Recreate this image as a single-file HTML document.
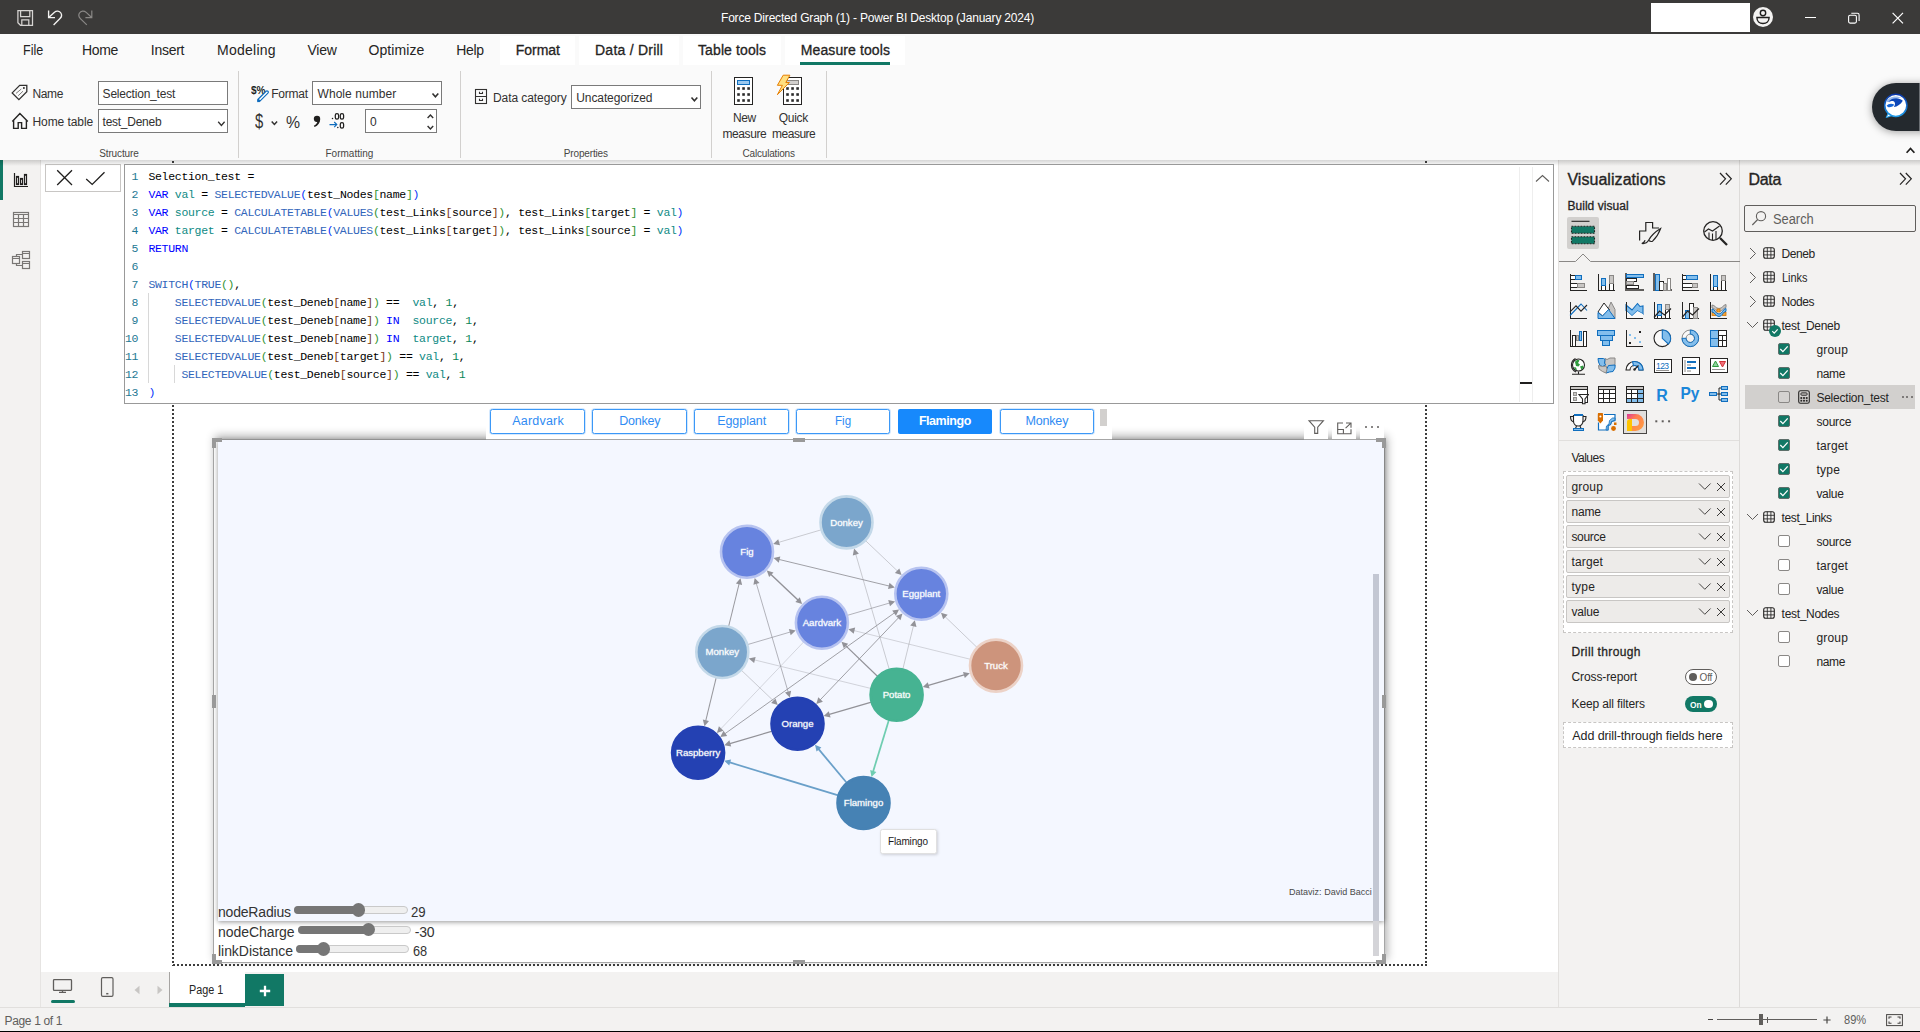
<!DOCTYPE html>
<html lang="en"><head><meta charset="utf-8"><title>Force Directed Graph (1) - Power BI Desktop</title>
<style>
html,body{margin:0;padding:0;}
body{width:1920px;height:1032px;overflow:hidden;background:#fff;font-family:"Liberation Sans",sans-serif;position:relative;}
#app{position:absolute;left:0;top:0;width:1920px;height:1032px;overflow:hidden;}
#app div,#app svg,#app span.t{position:absolute;box-sizing:border-box;}
span.t{white-space:pre;line-height:1;}

</style></head><body><div id="app">
<div style="left:40px;top:160px;width:1518px;height:812px;background:#ffffff;"></div>
<div style="left:0px;top:160px;width:40.5px;height:847px;background:#f3f2f1;border-right:1px solid #e6e4e2;"></div>
<div style="left:0px;top:160px;width:3px;height:40px;background:#117865;"></div>
<svg style="left:13px;top:172px;" width="16" height="16" viewBox="0 0 16 16"><g fill="none" stroke="#201f1e" stroke-width="1.200"><path d="M1.500 1v13.500H15"/><rect x="3.500" y="4.500" width="2" height="8"/><rect x="7.500" y="6.500" width="2" height="6"/><rect x="11.500" y="2.500" width="2" height="10"/></g></svg>
<svg style="left:12px;top:211px;" width="18" height="17" viewBox="0 0 18 17"><g fill="none" stroke="#797775" stroke-width="1.200"><rect x="1.500" y="1.500" width="15" height="14"/><path d="M1.500 3.500h15M1.500 7.500h15M1.500 11.500h15M6.500 3.500v12M11.500 3.500v12"/></g></svg>
<svg style="left:11px;top:250px;" width="20" height="20" viewBox="0 0 20 20"><g fill="none" stroke="#797775" stroke-width="1.200"><rect x="11.500" y="1.500" width="7" height="7"/><rect x="1.500" y="6.500" width="7" height="7"/><rect x="11.500" y="11.500" width="7" height="7"/><path d="M11.500 3.500h7M1.500 8.500h7M11.500 13.500h7M5.500 6.500v-2h6M5.500 13.500v2h6"/></g></svg>
<div style="left:45px;top:164px;width:76px;height:28px;background:#fff;border:1px solid #c8c6c4;"></div>
<svg style="left:56px;top:169.4px;" width="17" height="17" viewBox="0 0 17 17"><path d="M1.200 1.200l14.800 14.800M16 1.200L1.200 16" fill="none" stroke="#201f1e" stroke-width="1.300"/></svg>
<svg style="left:84.6px;top:171px;" width="21" height="15" viewBox="0 0 21 15"><path d="M1.200 8l6 5.400L19.500 1.200" fill="none" stroke="#201f1e" stroke-width="1.300"/></svg>
<div style="left:124px;top:164px;width:1430px;height:240px;background:#fff;border:1px solid #999999;z-index:60;"></div>
<div style="left:1518.5px;top:167px;width:1px;height:235px;background:#eeeeee;z-index:61;"></div>
<div style="left:1532px;top:167px;width:1px;height:235px;background:#eeeeee;z-index:61;"></div>
<div style="left:1519.5px;top:382px;width:12.5px;height:2px;background:#201f1e;z-index:61;"></div>
<svg style="left:1534.5px;top:174px;z-index:61;" width="15" height="9" viewBox="0 0 15 9"><path d="M1 7.500l6.500-6 6.500 6" fill="none" stroke="#605e5c" stroke-width="1.100"/></svg>
<div style="left:148px;top:293px;width:1px;height:90px;background:#d8d8d8;z-index:61;"></div>
<div style="left:174px;top:365px;width:1px;height:18px;background:#d8d8d8;z-index:61;"></div>
<div style='left:125px;top:167.6px;width:13px;text-align:right;color:#237893;font-family:"Liberation Mono",monospace;font-size:11.5px;letter-spacing:-0.3px;line-height:18px;white-space:pre;z-index:62;'>1</div>
<div style='left:148.400px;top:167.6px;font-family:"Liberation Mono",monospace;font-size:11.5px;letter-spacing:-0.3px;line-height:18px;white-space:pre;z-index:62;'><span style="color:#000000">Selection_test =</span></div>
<div style='left:125px;top:185.6px;width:13px;text-align:right;color:#237893;font-family:"Liberation Mono",monospace;font-size:11.5px;letter-spacing:-0.3px;line-height:18px;white-space:pre;z-index:62;'>2</div>
<div style='left:148.400px;top:185.6px;font-family:"Liberation Mono",monospace;font-size:11.5px;letter-spacing:-0.3px;line-height:18px;white-space:pre;z-index:62;'><span style="color:#0000ff">VAR</span> <span style="color:#0e8a84">val</span><span style="color:#000000"> = </span><span style="color:#3165bb">SELECTEDVALUE</span><span style="color:#0431fa">(</span><span style="color:#000000">test_Nodes</span><span style="color:#319331">[</span><span style="color:#000000">name</span><span style="color:#319331">]</span><span style="color:#0431fa">)</span></div>
<div style='left:125px;top:203.6px;width:13px;text-align:right;color:#237893;font-family:"Liberation Mono",monospace;font-size:11.5px;letter-spacing:-0.3px;line-height:18px;white-space:pre;z-index:62;'>3</div>
<div style='left:148.400px;top:203.6px;font-family:"Liberation Mono",monospace;font-size:11.5px;letter-spacing:-0.3px;line-height:18px;white-space:pre;z-index:62;'><span style="color:#0000ff">VAR</span> <span style="color:#0e8a84">source</span><span style="color:#000000"> = </span><span style="color:#3165bb">CALCULATETABLE</span><span style="color:#0431fa">(</span><span style="color:#3165bb">VALUES</span><span style="color:#319331">(</span><span style="color:#000000">test_Links</span><span style="color:#7b3814">[</span><span style="color:#000000">source</span><span style="color:#7b3814">]</span><span style="color:#319331">)</span><span style="color:#000000">, test_Links</span><span style="color:#319331">[</span><span style="color:#000000">target</span><span style="color:#319331">]</span><span style="color:#000000"> = </span><span style="color:#0e8a84">val</span><span style="color:#0431fa">)</span></div>
<div style='left:125px;top:221.6px;width:13px;text-align:right;color:#237893;font-family:"Liberation Mono",monospace;font-size:11.5px;letter-spacing:-0.3px;line-height:18px;white-space:pre;z-index:62;'>4</div>
<div style='left:148.400px;top:221.6px;font-family:"Liberation Mono",monospace;font-size:11.5px;letter-spacing:-0.3px;line-height:18px;white-space:pre;z-index:62;'><span style="color:#0000ff">VAR</span> <span style="color:#0e8a84">target</span><span style="color:#000000"> = </span><span style="color:#3165bb">CALCULATETABLE</span><span style="color:#0431fa">(</span><span style="color:#3165bb">VALUES</span><span style="color:#319331">(</span><span style="color:#000000">test_Links</span><span style="color:#7b3814">[</span><span style="color:#000000">target</span><span style="color:#7b3814">]</span><span style="color:#319331">)</span><span style="color:#000000">, test_Links</span><span style="color:#319331">[</span><span style="color:#000000">source</span><span style="color:#319331">]</span><span style="color:#000000"> = </span><span style="color:#0e8a84">val</span><span style="color:#0431fa">)</span></div>
<div style='left:125px;top:239.6px;width:13px;text-align:right;color:#237893;font-family:"Liberation Mono",monospace;font-size:11.5px;letter-spacing:-0.3px;line-height:18px;white-space:pre;z-index:62;'>5</div>
<div style='left:148.400px;top:239.6px;font-family:"Liberation Mono",monospace;font-size:11.5px;letter-spacing:-0.3px;line-height:18px;white-space:pre;z-index:62;'><span style="color:#0000ff">RETURN</span></div>
<div style='left:125px;top:257.6px;width:13px;text-align:right;color:#237893;font-family:"Liberation Mono",monospace;font-size:11.5px;letter-spacing:-0.3px;line-height:18px;white-space:pre;z-index:62;'>6</div>
<div style='left:125px;top:275.6px;width:13px;text-align:right;color:#237893;font-family:"Liberation Mono",monospace;font-size:11.5px;letter-spacing:-0.3px;line-height:18px;white-space:pre;z-index:62;'>7</div>
<div style='left:148.400px;top:275.6px;font-family:"Liberation Mono",monospace;font-size:11.5px;letter-spacing:-0.3px;line-height:18px;white-space:pre;z-index:62;'><span style="color:#3165bb">SWITCH</span><span style="color:#0431fa">(</span><span style="color:#3165bb">TRUE</span><span style="color:#319331">()</span><span style="color:#000000">,</span></div>
<div style='left:125px;top:293.6px;width:13px;text-align:right;color:#237893;font-family:"Liberation Mono",monospace;font-size:11.5px;letter-spacing:-0.3px;line-height:18px;white-space:pre;z-index:62;'>8</div>
<div style='left:148.400px;top:293.6px;font-family:"Liberation Mono",monospace;font-size:11.5px;letter-spacing:-0.3px;line-height:18px;white-space:pre;z-index:62;'>    <span style="color:#3165bb">SELECTEDVALUE</span><span style="color:#319331">(</span><span style="color:#000000">test_Deneb</span><span style="color:#7b3814">[</span><span style="color:#000000">name</span><span style="color:#7b3814">]</span><span style="color:#319331">)</span> <span style="color:#000000">==</span>  <span style="color:#0e8a84">val</span><span style="color:#000000">, </span><span style="color:#098658">1</span><span style="color:#000000">,</span></div>
<div style='left:125px;top:311.6px;width:13px;text-align:right;color:#237893;font-family:"Liberation Mono",monospace;font-size:11.5px;letter-spacing:-0.3px;line-height:18px;white-space:pre;z-index:62;'>9</div>
<div style='left:148.400px;top:311.6px;font-family:"Liberation Mono",monospace;font-size:11.5px;letter-spacing:-0.3px;line-height:18px;white-space:pre;z-index:62;'>    <span style="color:#3165bb">SELECTEDVALUE</span><span style="color:#319331">(</span><span style="color:#000000">test_Deneb</span><span style="color:#7b3814">[</span><span style="color:#000000">name</span><span style="color:#7b3814">]</span><span style="color:#319331">)</span> <span style="color:#0000ff">IN</span>  <span style="color:#0e8a84">source</span><span style="color:#000000">, </span><span style="color:#098658">1</span><span style="color:#000000">,</span></div>
<div style='left:125px;top:329.6px;width:13px;text-align:right;color:#237893;font-family:"Liberation Mono",monospace;font-size:11.5px;letter-spacing:-0.3px;line-height:18px;white-space:pre;z-index:62;'>10</div>
<div style='left:148.400px;top:329.6px;font-family:"Liberation Mono",monospace;font-size:11.5px;letter-spacing:-0.3px;line-height:18px;white-space:pre;z-index:62;'>    <span style="color:#3165bb">SELECTEDVALUE</span><span style="color:#319331">(</span><span style="color:#000000">test_Deneb</span><span style="color:#7b3814">[</span><span style="color:#000000">name</span><span style="color:#7b3814">]</span><span style="color:#319331">)</span> <span style="color:#0000ff">IN</span>  <span style="color:#0e8a84">target</span><span style="color:#000000">, </span><span style="color:#098658">1</span><span style="color:#000000">,</span></div>
<div style='left:125px;top:347.6px;width:13px;text-align:right;color:#237893;font-family:"Liberation Mono",monospace;font-size:11.5px;letter-spacing:-0.3px;line-height:18px;white-space:pre;z-index:62;'>11</div>
<div style='left:148.400px;top:347.6px;font-family:"Liberation Mono",monospace;font-size:11.5px;letter-spacing:-0.3px;line-height:18px;white-space:pre;z-index:62;'>    <span style="color:#3165bb">SELECTEDVALUE</span><span style="color:#319331">(</span><span style="color:#000000">test_Deneb</span><span style="color:#7b3814">[</span><span style="color:#000000">target</span><span style="color:#7b3814">]</span><span style="color:#319331">)</span> <span style="color:#000000">==</span> <span style="color:#0e8a84">val</span><span style="color:#000000">, </span><span style="color:#098658">1</span><span style="color:#000000">,</span></div>
<div style='left:125px;top:365.6px;width:13px;text-align:right;color:#237893;font-family:"Liberation Mono",monospace;font-size:11.5px;letter-spacing:-0.3px;line-height:18px;white-space:pre;z-index:62;'>12</div>
<div style='left:148.400px;top:365.6px;font-family:"Liberation Mono",monospace;font-size:11.5px;letter-spacing:-0.3px;line-height:18px;white-space:pre;z-index:62;'>     <span style="color:#3165bb">SELECTEDVALUE</span><span style="color:#319331">(</span><span style="color:#000000">test_Deneb</span><span style="color:#7b3814">[</span><span style="color:#000000">source</span><span style="color:#7b3814">]</span><span style="color:#319331">)</span> <span style="color:#000000">==</span> <span style="color:#0e8a84">val</span><span style="color:#000000">, </span><span style="color:#098658">1</span><span style="color:#000000"></span></div>
<div style='left:125px;top:383.6px;width:13px;text-align:right;color:#237893;font-family:"Liberation Mono",monospace;font-size:11.5px;letter-spacing:-0.3px;line-height:18px;white-space:pre;z-index:62;'>13</div>
<div style='left:148.400px;top:383.6px;font-family:"Liberation Mono",monospace;font-size:11.5px;letter-spacing:-0.3px;line-height:18px;white-space:pre;z-index:62;'><span style="color:#0431fa">)</span></div>
<div style="left:172px;top:161px;width:2px;height:805px;background:repeating-linear-gradient(to bottom,#3d3d3d 0,#3d3d3d 2px,transparent 2px,transparent 4px);"></div>
<div style="left:1425px;top:161px;width:2px;height:805px;background:repeating-linear-gradient(to bottom,#3d3d3d 0,#3d3d3d 2px,transparent 2px,transparent 4px);"></div>
<div style="left:173px;top:964px;width:1254px;height:2px;background:repeating-linear-gradient(to right,#3d3d3d 0,#3d3d3d 2px,transparent 2px,transparent 4px);"></div>
<div style="left:213px;top:439px;width:1172px;height:524px;background:#fff;border:1px solid #a6a6a6;box-shadow:2px -3px 9px rgba(0,0,0,.32);"></div>
<div style="left:217.5px;top:440px;width:1166.5px;height:481px;background:#f4f7ff;box-shadow:0 1px 5px rgba(0,0,0,.42);"></div>
<div style="left:1373px;top:574px;width:5.6px;height:347px;background:#c3c7d3;"></div>
<div style="left:1373px;top:921px;width:5.6px;height:35px;background:#d4d4d8;"></div>
<div style="left:486px;top:404px;width:626px;height:35px;background:#fff;"></div>
<div style="left:486px;top:439px;width:626px;height:1px;background:#a6a6a6;"></div>
<div style="left:1304px;top:415px;width:24px;height:24px;background:#fff;"></div>
<div style="left:1332px;top:415px;width:24px;height:24px;background:#fff;"></div>
<div style="left:1360px;top:415px;width:24px;height:24px;background:#fff;"></div>
<div style="left:1304px;top:439px;width:81px;height:1px;background:#a6a6a6;"></div>
<svg style="left:1307px;top:419px;" width="18" height="16" viewBox="0 0 18 16"><path d="M2 1.700h14.400l-5.700 6.500v6.200H7.700V8.200z" fill="none" stroke="#605e5c" stroke-width="1.100"/></svg>
<svg style="left:1336px;top:420.5px;" width="17" height="15" viewBox="0 0 17 15"><g fill="none" stroke="#605e5c" stroke-width="1.100"><path d="M7 2H1.700v10.700h13.300V8.300"/><path d="M1.700 8.500h5.700v4.200"/><path d="M10 2h5v4.800M14.800 2.200l-5.200 5"/></g></svg>
<div style="left:1365px;top:425.7px;width:2.2px;height:2.2px;background:#605e5c;border-radius:50%;"></div>
<div style="left:1371px;top:425.7px;width:2.2px;height:2.2px;background:#605e5c;border-radius:50%;"></div>
<div style="left:1377px;top:425.7px;width:2.2px;height:2.2px;background:#605e5c;border-radius:50%;"></div>
<div style="left:490.3px;top:408.6px;width:94.6px;height:25.3px;background:#fff;border:1px solid #3b98f7;border-radius:2.5px;box-shadow:0 0 0 0.8px rgba(59,152,247,.28);"></div>
<span class="t" style='left:512.20px;top:415.00px;font-size:12.5px;color:#2f8bf3;letter-spacing:0.210px;'>Aardvark</span>
<div style="left:592.16px;top:408.6px;width:94.6px;height:25.3px;background:#fff;border:1px solid #3b98f7;border-radius:2.5px;box-shadow:0 0 0 0.8px rgba(59,152,247,.28);"></div>
<span class="t" style='left:619.20px;top:415.00px;font-size:12.5px;color:#2f8bf3;letter-spacing:-0.218px;'>Donkey</span>
<div style="left:694.02px;top:408.6px;width:94.6px;height:25.3px;background:#fff;border:1px solid #3b98f7;border-radius:2.5px;box-shadow:0 0 0 0.8px rgba(59,152,247,.28);"></div>
<span class="t" style='left:717.20px;top:415.00px;font-size:12.5px;color:#2f8bf3;letter-spacing:-0.051px;'>Eggplant</span>
<div style="left:795.88px;top:408.6px;width:94.6px;height:25.3px;background:#fff;border:1px solid #3b98f7;border-radius:2.5px;box-shadow:0 0 0 0.8px rgba(59,152,247,.28);"></div>
<span class="t" style='left:835.20px;top:415.00px;font-size:12.5px;color:#2f8bf3;transform-origin:0 50%;transform:scaleX(0.9266);'>Fig</span>
<div style="left:897.74px;top:408.6px;width:94.6px;height:25.3px;background:#1789fc;border-radius:2px;"></div>
<span class="t" style='left:918.90px;top:415.00px;font-size:12.5px;color:#ffffff;font-weight:700;letter-spacing:-0.452px;'>Flamingo</span>
<div style="left:999.6px;top:408.6px;width:94.6px;height:25.3px;background:#fff;border:1px solid #3b98f7;border-radius:2.5px;box-shadow:0 0 0 0.8px rgba(59,152,247,.28);"></div>
<span class="t" style='left:1025.40px;top:415.00px;font-size:12.5px;color:#2f8bf3;letter-spacing:-0.156px;'>Monkey</span>
<div style="left:1099.8px;top:408.6px;width:7px;height:17.5px;background:#d2d0ce;"></div>
<div style="left:212px;top:438px;width:10px;height:4px;background:#999999;"></div>
<div style="left:212px;top:438px;width:4px;height:10px;background:#999999;"></div>
<div style="left:1376px;top:438px;width:10px;height:4px;background:#999999;"></div>
<div style="left:1382px;top:438px;width:4px;height:10px;background:#999999;"></div>
<div style="left:212px;top:960px;width:10px;height:4px;background:#999999;"></div>
<div style="left:212px;top:954px;width:4px;height:10px;background:#999999;"></div>
<div style="left:1376px;top:960px;width:10px;height:4px;background:#999999;"></div>
<div style="left:1382px;top:954px;width:4px;height:10px;background:#999999;"></div>
<div style="left:793px;top:438px;width:12px;height:4px;background:#999999;"></div>
<div style="left:793px;top:960px;width:12px;height:4px;background:#999999;"></div>
<div style="left:212px;top:695px;width:4px;height:13px;background:#999999;"></div>
<div style="left:1382px;top:695px;width:4px;height:13px;background:#999999;"></div>
<svg style="left:217px;top:440px;font-family:'Liberation Sans',sans-serif;" width="1167" height="481" viewBox="0 0 1167 481"><line x1="604.3" y1="89.8" x2="560.9" y2="102.6" stroke="#929298" stroke-width="0.64" stroke-opacity="0.7"/><path d="M556.2 104.0L561.2 99.2L563.0 105.3z" fill="#929298"/><line x1="648.5" y1="100.6" x2="681.0" y2="131.5" stroke="#929298" stroke-width="0.64" stroke-opacity="0.7"/><path d="M684.6 135.0L677.9 133.0L682.3 128.4z" fill="#929298"/><line x1="561.4" y1="119.3" x2="672.9" y2="146.2" stroke="#929298" stroke-width="0.96" stroke-opacity="0.9"/><path d="M677.8 147.4L671.0 149.0L672.5 142.8z" fill="#929298"/><path d="M556.5 118.1L563.3 116.5L561.8 122.7z" fill="#929298"/><line x1="553.4" y1="133.9" x2="581.5" y2="160.5" stroke="#929298" stroke-width="1.44" stroke-opacity="1"/><path d="M585.1 163.9L578.4 162.0L582.8 157.3z" fill="#929298"/><path d="M549.8 130.5L556.5 132.4L552.1 137.1z" fill="#929298"/><line x1="511.6" y1="186.5" x2="522.3" y2="143.0" stroke="#929298" stroke-width="1.04" stroke-opacity="0.95"/><path d="M523.5 138.2L525.1 145.0L518.9 143.5z" fill="#929298"/><line x1="539.1" y1="142.7" x2="571.4" y2="252.8" stroke="#929298" stroke-width="0.80" stroke-opacity="0.85"/><path d="M572.8 257.6L568.0 252.6L574.1 250.8z" fill="#929298"/><path d="M537.7 137.9L542.5 142.9L536.4 144.7z" fill="#929298"/><line x1="630.2" y1="175.4" x2="673.3" y2="162.8" stroke="#929298" stroke-width="0.80" stroke-opacity="0.85"/><path d="M678.1 161.4L673.0 166.2L671.2 160.1z" fill="#929298"/><line x1="530.5" y1="204.6" x2="574.0" y2="191.8" stroke="#929298" stroke-width="0.80" stroke-opacity="0.85"/><path d="M578.7 190.4L573.7 195.2L571.9 189.1z" fill="#929298"/><line x1="753.5" y1="219.3" x2="636.2" y2="190.4" stroke="#929298" stroke-width="0.56" stroke-opacity="0.65"/><path d="M631.4 189.2L638.2 187.6L636.7 193.8z" fill="#929298"/><line x1="660.7" y1="236.5" x2="628.1" y2="205.1" stroke="#929298" stroke-width="1.20" stroke-opacity="1"/><path d="M624.5 201.7L631.2 203.7L626.8 208.3z" fill="#929298"/><line x1="672.3" y1="229.5" x2="638.5" y2="113.4" stroke="#929298" stroke-width="0.64" stroke-opacity="0.7"/><path d="M637.1 108.6L641.9 113.7L635.8 115.5z" fill="#929298"/><line x1="685.8" y1="229.3" x2="696.6" y2="185.1" stroke="#929298" stroke-width="0.64" stroke-opacity="0.7"/><path d="M697.8 180.3L699.5 187.1L693.2 185.6z" fill="#929298"/><line x1="760.0" y1="207.4" x2="727.6" y2="176.2" stroke="#929298" stroke-width="0.64" stroke-opacity="0.7"/><path d="M724.0 172.7L730.7 174.7L726.2 179.3z" fill="#929298"/><line x1="710.6" y1="245.7" x2="748.0" y2="234.7" stroke="#929298" stroke-width="1.20" stroke-opacity="1"/><path d="M752.8 233.3L747.8 238.1L746.0 232.0z" fill="#929298"/><path d="M705.8 247.1L710.8 242.3L712.6 248.4z" fill="#929298"/><line x1="654.1" y1="248.5" x2="536.6" y2="219.7" stroke="#929298" stroke-width="0.56" stroke-opacity="0.65"/><path d="M531.8 218.5L538.6 216.9L537.1 223.1z" fill="#929298"/><line x1="654.4" y1="262.2" x2="611.5" y2="274.7" stroke="#929298" stroke-width="1.20" stroke-opacity="1"/><path d="M606.7 276.1L611.8 271.3L613.6 277.5z" fill="#929298"/><line x1="524.3" y1="230.2" x2="557.2" y2="261.5" stroke="#929298" stroke-width="0.64" stroke-opacity="0.7"/><path d="M560.8 264.9L554.1 263.0L558.5 258.4z" fill="#929298"/><line x1="499.2" y1="237.6" x2="488.6" y2="281.4" stroke="#929298" stroke-width="1.04" stroke-opacity="0.95"/><path d="M487.5 286.3L485.8 279.5L492.0 281.0z" fill="#929298"/><line x1="682.1" y1="177.2" x2="602.7" y2="260.4" stroke="#929298" stroke-width="0.96" stroke-opacity="0.9"/><path d="M599.3 264.0L601.3 257.3L605.9 261.7z" fill="#929298"/><path d="M685.5 173.6L683.5 180.3L678.9 175.9z" fill="#929298"/><line x1="678.0" y1="172.5" x2="507.4" y2="294.1" stroke="#929298" stroke-width="0.96" stroke-opacity="0.9"/><path d="M503.3 297.0L506.5 290.8L510.2 296.0z" fill="#929298"/><path d="M682.1 169.6L678.9 175.8L675.2 170.6z" fill="#929298"/><line x1="586.8" y1="201.8" x2="503.3" y2="289.4" stroke="#929298" stroke-width="0.56" stroke-opacity="0.6"/><path d="M499.9 293.0L501.9 286.3L506.5 290.7z" fill="#929298"/><line x1="555.3" y1="291.2" x2="512.1" y2="303.8" stroke="#929298" stroke-width="1.20" stroke-opacity="1"/><path d="M507.3 305.2L512.4 300.3L514.2 306.5z" fill="#929298"/><line x1="671.9" y1="279.9" x2="655.9" y2="332.2" stroke="#6fcdb1" stroke-width="1.76" stroke-opacity="1"/><path d="M654.5 336.9L653.2 330.0L659.4 331.9z" fill="#6fcdb1"/><line x1="629.7" y1="342.8" x2="601.2" y2="308.6" stroke="#6aa0c9" stroke-width="1.76" stroke-opacity="1"/><path d="M598.0 304.8L604.4 307.5L599.5 311.6z" fill="#6aa0c9"/><line x1="621.3" y1="355.4" x2="512.0" y2="322.2" stroke="#6aa0c9" stroke-width="1.76" stroke-opacity="1"/><path d="M507.2 320.7L514.1 319.5L512.2 325.6z" fill="#6aa0c9"/><circle cx="629.5" cy="82.4" r="26" fill="#7ba6cc" stroke="#c4d9e9" stroke-width="2.600"/><circle cx="530.0" cy="111.7" r="26" fill="#6783df" stroke="#b7c3f0" stroke-width="2.600"/><circle cx="704.3" cy="153.8" r="26" fill="#6783df" stroke="#b7c3f0" stroke-width="2.600"/><circle cx="604.9" cy="182.7" r="26" fill="#6783df" stroke="#b7c3f0" stroke-width="2.600"/><circle cx="505.3" cy="212.0" r="26" fill="#7ba6cc" stroke="#c4d9e9" stroke-width="2.600"/><circle cx="779.0" cy="225.6" r="26" fill="#cd947c" stroke="#ecd2c7" stroke-width="2.600"/><circle cx="679.6" cy="254.8" r="26" fill="#46b392" stroke="#46b392" stroke-width="2.600"/><circle cx="580.5" cy="283.8" r="26" fill="#2441b3" stroke="#2441b3" stroke-width="2.600"/><circle cx="481.1" cy="312.8" r="26" fill="#2441b3" stroke="#2441b3" stroke-width="2.600"/><circle cx="646.5" cy="363.0" r="26" fill="#4682b4" stroke="#4682b4" stroke-width="2.600"/><text x="629.5" y="85.7" text-anchor="middle" font-size="9.600" fill="#fff" stroke="#fff" stroke-width="0.900" stroke-opacity=".38">Donkey</text><text x="530.0" y="115.0" text-anchor="middle" font-size="9.600" fill="#fff" stroke="#fff" stroke-width="0.900" stroke-opacity=".38">Fig</text><text x="704.3" y="157.1" text-anchor="middle" font-size="9.600" fill="#fff" stroke="#fff" stroke-width="0.900" stroke-opacity=".38">Eggplant</text><text x="604.9" y="186.0" text-anchor="middle" font-size="9.600" fill="#fff" stroke="#fff" stroke-width="0.900" stroke-opacity=".38">Aardvark</text><text x="505.3" y="215.3" text-anchor="middle" font-size="9.600" fill="#fff" stroke="#fff" stroke-width="0.900" stroke-opacity=".38">Monkey</text><text x="779.0" y="228.9" text-anchor="middle" font-size="9.600" fill="#fff" stroke="#fff" stroke-width="0.900" stroke-opacity=".38">Truck</text><text x="679.6" y="258.1" text-anchor="middle" font-size="9.600" fill="#fff" stroke="#fff" stroke-width="0.900" stroke-opacity=".38">Potato</text><text x="580.5" y="287.1" text-anchor="middle" font-size="9.600" fill="#fff" stroke="#fff" stroke-width="0.900" stroke-opacity=".38">Orange</text><text x="481.1" y="316.1" text-anchor="middle" font-size="9.600" fill="#fff" stroke="#fff" stroke-width="0.900" stroke-opacity=".38">Raspberry</text><text x="646.5" y="366.3" text-anchor="middle" font-size="9.600" fill="#fff" stroke="#fff" stroke-width="0.900" stroke-opacity=".38">Flamingo</text></svg>
<div style="left:879.5px;top:828.5px;width:57px;height:25.5px;background:#fff;border:1px solid #e0e0e0;border-radius:2.5px;box-shadow:1px 1px 3px rgba(0,0,0,.16);"></div>
<span class="t" style='left:888.00px;top:837.00px;font-size:10px;color:#1b1b1b;letter-spacing:-0.163px;'>Flamingo</span>
<span class="t" style='left:1289.00px;top:888.00px;font-size:9px;color:#4a4a4a;letter-spacing:0.014px;'>Dataviz: David Bacci</span>
<div style="left:294px;top:906px;width:113.5px;height:8px;background:#efefef;border:1px solid #c9c9c9;border-radius:4px;"></div>
<div style="left:294px;top:906px;width:64.30000000000001px;height:8px;background:#767676;border-radius:4px 0 0 4px;"></div>
<div style="left:351.6px;top:903.3px;width:13.4px;height:13.4px;background:#767676;border-radius:50%;"></div>
<div style="left:298px;top:925.7px;width:112.80000000000001px;height:8px;background:#efefef;border:1px solid #c9c9c9;border-radius:4px;"></div>
<div style="left:298px;top:925.7px;width:70.30000000000001px;height:8px;background:#767676;border-radius:4px 0 0 4px;"></div>
<div style="left:361.6px;top:923.0px;width:13.4px;height:13.4px;background:#767676;border-radius:50%;"></div>
<div style="left:295.8px;top:945px;width:113.19999999999999px;height:8px;background:#efefef;border:1px solid #c9c9c9;border-radius:4px;"></div>
<div style="left:295.8px;top:945px;width:28.0px;height:8px;background:#767676;border-radius:4px 0 0 4px;"></div>
<div style="left:317.1px;top:942.3px;width:13.4px;height:13.4px;background:#767676;border-radius:50%;"></div>
<span class="t" style='left:218.00px;top:905.00px;font-size:14px;color:#333;letter-spacing:-0.193px;'>nodeRadius</span>
<span class="t" style='left:218.00px;top:925.00px;font-size:14px;color:#333;letter-spacing:-0.062px;'>nodeCharge</span>
<span class="t" style='left:218.00px;top:944.00px;font-size:14px;color:#333;letter-spacing:-0.044px;'>linkDistance</span>
<span class="t" style='left:410.80px;top:905.00px;font-size:14px;color:#333;transform-origin:0 50%;transform:scaleX(0.9436);'>29</span>
<span class="t" style='left:414.70px;top:925.00px;font-size:14px;color:#333;letter-spacing:-0.217px;'>-30</span>
<span class="t" style='left:412.80px;top:944.00px;font-size:14px;color:#333;transform-origin:0 50%;transform:scaleX(0.9115);'>68</span>
<div style="left:1558px;top:160px;width:362px;height:847px;background:#f3f2f1;"></div>
<div style="left:1558px;top:160px;width:1px;height:847px;background:#e3e1df;"></div>
<div style="left:1739px;top:160px;width:1px;height:847px;background:#dddbd9;"></div>
<span class="t" style='left:1567.40px;top:172.00px;font-size:16px;color:#252423;letter-spacing:0.050px;-webkit-text-stroke:0.35px #252423;'>Visualizations</span>
<svg style="left:1718.5px;top:172px;" width="14" height="14" viewBox="0 0 14 14"><path d="M1 1l5.500 5.800L1 12.600M6.800 1l5.500 5.800-5.500 5.800" fill="none" stroke="#252423" stroke-width="1.200"/></svg>
<span class="t" style='left:1567.40px;top:200.00px;font-size:12px;color:#252423;letter-spacing:0.054px;-webkit-text-stroke:0.3px #252423;'>Build visual</span>
<div style="left:1567px;top:217px;width:32px;height:32px;background:#d2d0ce;border-radius:2px;"></div>
<svg style="left:1570px;top:220px;" width="26" height="26" viewBox="0 0 26 26"><path d="M1.500 1.300h18" stroke="#252423" stroke-width="1.100"/><rect x="1.500" y="6.300" width="23" height="7" fill="#117865" stroke="#252423" stroke-width="1.100" stroke-dasharray="1.800 1.200"/><rect x="1.500" y="16.800" width="23" height="7" fill="#117865" stroke="#252423" stroke-width="1.100" stroke-dasharray="1.800 1.200"/></svg>
<svg style="left:1638px;top:221px;" width="24" height="24" viewBox="0 0 24 24"><g fill="none" stroke="#252423" stroke-width="1.200"><path d="M1.600 19.500V10h6.200V1.500h6.800V7h6.400"/><path d="M22.600 7.600C17 11 13 15 10.600 19.300c1.300 1.200 2.600 1.500 4 .9 3.600-3.600 6.300-7.800 8-12.600z"/><path d="M10.600 19.300c-1.400 2.500-3.800 3.600-6.800 3.200 1.700-.6 2.800-1.700 3.300-3.300"/></g></svg>
<svg style="left:1702px;top:220px;" width="26" height="26" viewBox="0 0 26 26"><g fill="none" stroke="#252423"><circle cx="11" cy="11" r="9.300" stroke-width="1.300"/><path d="M2.500 12l4-3 4 2 7-5" stroke-width="1.100"/><path d="M7 12.500v6.500M10.500 13.500v6.500M14 11v8.500" stroke-width="1.100"/><path d="M18 18l7 7" stroke-width="2.300"/></g></svg>
<svg style="left:1559px;top:252px;" width="181" height="11" viewBox="0 0 181 11"><path d="M0 9.500h16.500l7.500-7.500 7.500 7.500H181" fill="none" stroke="#8a8886" stroke-width="1"/></svg>
<svg style="left:1569px;top:273px;" width="20" height="20" viewBox="0 0 20 20"><path d="M1 0.500V17h17" fill="none" stroke="#252423" stroke-width="1" shape-rendering="crispEdges"/><rect x="1" y="2.5" width="5" height="4" fill="#ffffff" stroke="#252423" stroke-width="1" shape-rendering="crispEdges"/><rect x="6" y="2.5" width="6" height="4" fill="#83beec" stroke="#106ebe" stroke-width="1" shape-rendering="crispEdges"/><rect x="1" y="10.5" width="7" height="4" fill="#ffffff" stroke="#252423" stroke-width="1" shape-rendering="crispEdges"/><rect x="8" y="10.5" width="7.5" height="4" fill="#c8c6c4" stroke="#8a8886" stroke-width="1" shape-rendering="crispEdges"/></svg>
<svg style="left:1597px;top:273px;" width="20" height="20" viewBox="0 0 20 20"><path d="M1 0.500V17h17" fill="none" stroke="#252423" stroke-width="1" shape-rendering="crispEdges"/><rect x="4" y="12" width="4" height="5" fill="#ffffff" stroke="#252423" stroke-width="1" shape-rendering="crispEdges"/><rect x="4" y="5.5" width="4" height="6.5" fill="#83beec" stroke="#106ebe" stroke-width="1" shape-rendering="crispEdges"/><rect x="12" y="10" width="4" height="7" fill="#ffffff" stroke="#252423" stroke-width="1" shape-rendering="crispEdges"/><rect x="12" y="2.5" width="4" height="7.5" fill="#c8c6c4" stroke="#8a8886" stroke-width="1" shape-rendering="crispEdges"/></svg>
<svg style="left:1625px;top:273px;" width="20" height="20" viewBox="0 0 20 20"><path d="M1 0v17.300h18" fill="none" stroke="#605e5c" stroke-width="2" shape-rendering="crispEdges"/><rect x="1.5" y="1" width="16.5" height="3.4" fill="#83beec" stroke="#106ebe" stroke-width="1" shape-rendering="crispEdges"/><rect x="1.5" y="5" width="9.5" height="3" fill="#ffffff" stroke="#252423" stroke-width="1" shape-rendering="crispEdges"/><rect x="1.5" y="8.6" width="6.5" height="3" fill="#c8c6c4" stroke="#8a8886" stroke-width="1" shape-rendering="crispEdges"/><rect x="1.5" y="12.2" width="12" height="3.3" fill="#ffffff" stroke="#252423" stroke-width="1" shape-rendering="crispEdges"/></svg>
<svg style="left:1653px;top:273px;" width="20" height="20" viewBox="0 0 20 20"><path d="M1 0v17.300h18" fill="none" stroke="#605e5c" stroke-width="2" shape-rendering="crispEdges"/><rect x="2" y="1" width="4" height="16" fill="#83beec" stroke="#106ebe" stroke-width="1" shape-rendering="crispEdges"/><rect x="6.5" y="8" width="3.5" height="9" fill="#ffffff" stroke="#252423" stroke-width="1" shape-rendering="crispEdges"/><rect x="10.5" y="10.5" width="3" height="6.5" fill="#c8c6c4" stroke="#8a8886" stroke-width="1" shape-rendering="crispEdges"/><rect x="14" y="5.5" width="3.5" height="11.5" fill="#ffffff" stroke="#8a8886" stroke-width="1" shape-rendering="crispEdges"/></svg>
<svg style="left:1681px;top:273px;" width="20" height="20" viewBox="0 0 20 20"><path d="M1 0.500V17h17" fill="none" stroke="#252423" stroke-width="1" shape-rendering="crispEdges"/><rect x="1" y="2.5" width="4" height="4" fill="#ffffff" stroke="#252423" stroke-width="1" shape-rendering="crispEdges"/><rect x="5" y="2.5" width="11" height="4" fill="#83beec" stroke="#106ebe" stroke-width="1" shape-rendering="crispEdges"/><rect x="1" y="10.5" width="10" height="4" fill="#ffffff" stroke="#252423" stroke-width="1" shape-rendering="crispEdges"/><rect x="11" y="10.5" width="5" height="4" fill="#c8c6c4" stroke="#8a8886" stroke-width="1" shape-rendering="crispEdges"/></svg>
<svg style="left:1709px;top:273px;" width="20" height="20" viewBox="0 0 20 20"><path d="M1 0.500V17h17" fill="none" stroke="#252423" stroke-width="1" shape-rendering="crispEdges"/><rect x="4" y="13.5" width="4" height="3.5" fill="#ffffff" stroke="#252423" stroke-width="1" shape-rendering="crispEdges"/><rect x="4" y="2.5" width="4" height="11" fill="#83beec" stroke="#106ebe" stroke-width="1" shape-rendering="crispEdges"/><rect x="12" y="7.5" width="4" height="9.5" fill="#ffffff" stroke="#252423" stroke-width="1" shape-rendering="crispEdges"/><rect x="12" y="2.5" width="4" height="5" fill="#c8c6c4" stroke="#8a8886" stroke-width="1" shape-rendering="crispEdges"/></svg>
<svg style="left:1569px;top:301px;" width="20" height="20" viewBox="0 0 20 20"><path d="M1 0.500V17h17" fill="none" stroke="#252423" stroke-width="1" shape-rendering="crispEdges"/><path d="M1 14.500L12 3l6 6.500" fill="none" stroke="#106ebe" stroke-width="1.100"/><path d="M1 10.800L7 4.800l5 5.400 6-6.200" fill="none" stroke="#252423" stroke-width="1.100"/></svg>
<svg style="left:1597px;top:301px;" width="20" height="20" viewBox="0 0 20 20"><path d="M10 10.500L14 1l4 7.500V17.500z" fill="#c8c6c4" stroke="#8a8886" stroke-width="1"/><path d="M1 11L7 2l5.500 7-7 6z" fill="#ffffff" stroke="#252423" stroke-width="1"/><path d="M1 11.500l4.500 3.500 6-6.500 6.500 9H1z" fill="#83beec" stroke="#106ebe" stroke-width="1"/></svg>
<svg style="left:1625px;top:301px;" width="20" height="20" viewBox="0 0 20 20"><path d="M1 4l6 5 5.500-6.500 2.500 3 3-.5V13l-5.500-3L7 15 1 9.500z" fill="#83beec" stroke="#106ebe" stroke-width="1.100"/><path d="M1 9.500L7 15l5.500-5 5.500 3v4H1z" fill="#faf9f8"/><path d="M1 0.500V17h17" fill="none" stroke="#252423" stroke-width="1" shape-rendering="crispEdges"/></svg>
<svg style="left:1653px;top:301px;" width="20" height="20" viewBox="0 0 20 20"><path d="M1 0.500V17h17" fill="none" stroke="#252423" stroke-width="1" shape-rendering="crispEdges"/><rect x="4" y="14" width="4" height="3" fill="#ffffff" stroke="#252423" stroke-width="1" shape-rendering="crispEdges"/><rect x="4" y="3" width="4" height="11" fill="#83beec" stroke="#106ebe" stroke-width="1" shape-rendering="crispEdges"/><rect x="12" y="8" width="4" height="9" fill="#ffffff" stroke="#252423" stroke-width="1" shape-rendering="crispEdges"/><rect x="12" y="3" width="4" height="5" fill="#c8c6c4" stroke="#8a8886" stroke-width="1" shape-rendering="crispEdges"/><path d="M1 16.500l5.500-6.500 5 4L18 7.500" fill="none" stroke="#252423" stroke-width="1.200"/></svg>
<svg style="left:1681px;top:301px;" width="20" height="20" viewBox="0 0 20 20"><path d="M1 0.500V17h17" fill="none" stroke="#252423" stroke-width="1" shape-rendering="crispEdges"/><rect x="4" y="9" width="4" height="8" fill="#83beec" stroke="#106ebe" stroke-width="1" shape-rendering="crispEdges"/><rect x="8" y="2" width="4" height="15" fill="#ffffff" stroke="#252423" stroke-width="1" shape-rendering="crispEdges"/><rect x="12.5" y="6" width="3.5" height="11" fill="#c8c6c4" stroke="#8a8886" stroke-width="1" shape-rendering="crispEdges"/><path d="M1 16.500l5.500-6.500 5 4L18 7.500" fill="none" stroke="#252423" stroke-width="1.200"/></svg>
<svg style="left:1709px;top:301px;" width="20" height="20" viewBox="0 0 20 20"><path d="M1 0.500V17h17" fill="none" stroke="#252423" stroke-width="1" shape-rendering="crispEdges"/><path d="M3 4c3 0 3.500 3.500 7 3.500S14 4 17 3.500v3c-3 .5-3.500 4-7 4S6 7 3 7z" fill="#c8c6c4" stroke="#8a8886" stroke-width="1"/><rect x="3" y="11" width="4" height="3.500" fill="#f2a33a" stroke="#d47500" stroke-width=".8"/><rect x="13.500" y="11.500" width="3.500" height="3" fill="#f2a33a" stroke="#d47500" stroke-width=".8"/><rect x="8" y="8" width="3" height="3" fill="#f2a33a" stroke="#d47500" stroke-width=".8"/><path d="M3 8c3 0 3.500 5 7 5s4-5.500 7-5.500v2.800c-3 0-3.500 5.200-7 5.200S6 11 3 11z" fill="#83beec" stroke="#106ebe" stroke-width="1"/></svg>
<svg style="left:1569px;top:329px;" width="20" height="20" viewBox="0 0 20 20"><path d="M1 0.500V17h17" fill="none" stroke="#252423" stroke-width="1" shape-rendering="crispEdges"/><rect x="3" y="6" width="3" height="11" fill="#ffffff" stroke="#252423" stroke-width="1" shape-rendering="crispEdges"/><rect x="7" y="6" width="2.5" height="5" fill="#c8c6c4" stroke="#8a8886" stroke-width="1" shape-rendering="crispEdges"/><rect x="10" y="2" width="2.5" height="9" fill="#83beec" stroke="#106ebe" stroke-width="1" shape-rendering="crispEdges"/><rect x="14" y="2" width="3" height="15" fill="#ffffff" stroke="#252423" stroke-width="1" shape-rendering="crispEdges"/></svg>
<svg style="left:1597px;top:329px;" width="20" height="20" viewBox="0 0 20 20"><rect x="0.8" y="1.5" width="17" height="4.5" fill="#83beec" stroke="#106ebe" stroke-width="1" shape-rendering="crispEdges"/><rect x="3" y="6.5" width="12.5" height="4.5" fill="#83beec" stroke="#106ebe" stroke-width="1" shape-rendering="crispEdges"/><rect x="5.8" y="11.5" width="7" height="4.5" fill="#83beec" stroke="#106ebe" stroke-width="1" shape-rendering="crispEdges"/></svg>
<svg style="left:1625px;top:329px;" width="20" height="20" viewBox="0 0 20 20"><path d="M1 0.500V17h17" fill="none" stroke="#252423" stroke-width="1" shape-rendering="crispEdges"/><rect x="13.5" y="1.5" width="2.5" height="2.5" fill="#252423" stroke="#252423" stroke-width="0" shape-rendering="crispEdges"/><rect x="3.5" y="12.5" width="2.5" height="2.5" fill="#252423" stroke="#252423" stroke-width="0" shape-rendering="crispEdges"/><rect x="3.5" y="4.5" width="2.5" height="2.5" fill="#83beec" stroke="#83beec" stroke-width="0" shape-rendering="crispEdges"/><rect x="8.5" y="7.5" width="2.5" height="2.5" fill="#83beec" stroke="#83beec" stroke-width="0" shape-rendering="crispEdges"/><rect x="13.5" y="11.5" width="2.5" height="2.5" fill="#83beec" stroke="#83beec" stroke-width="0" shape-rendering="crispEdges"/></svg>
<svg style="left:1653px;top:329px;" width="20" height="20" viewBox="0 0 20 20"><circle cx="9.300" cy="9.300" r="8.300" fill="#faf9f8" stroke="#252423" stroke-width="1.100"/><path d="M9.300 9.300V1a8.300 8.300 0 0 1 6 14z" fill="#83beec" stroke="#106ebe" stroke-width="1.100"/></svg>
<svg style="left:1681px;top:329px;" width="20" height="20" viewBox="0 0 20 20"><circle cx="9.300" cy="9.300" r="6.300" fill="none" stroke="#faf9f8" stroke-width="4"/><circle cx="9.300" cy="9.300" r="8.300" fill="none" stroke="#8a8886" stroke-width="1"/><circle cx="9.300" cy="9.300" r="4.200" fill="none" stroke="#8a8886" stroke-width="1"/><path d="M9.300 3A6.300 6.300 0 1 1 3 9.300" fill="none" stroke="#83beec" stroke-width="3.800"/><path d="M9.300 1a8.300 8.300 0 1 1-8.300 8.300h4.100a4.200 4.200 0 1 0 4.200-4.200z" fill="none" stroke="#106ebe" stroke-width="1"/></svg>
<svg style="left:1709px;top:329px;" width="20" height="20" viewBox="0 0 20 20"><rect x="1" y="1" width="8.5" height="8.5" fill="#83beec" stroke="#106ebe" stroke-width="1" shape-rendering="crispEdges"/><rect x="1" y="9.5" width="8.5" height="7.5" fill="#83beec" stroke="#106ebe" stroke-width="1" shape-rendering="crispEdges"/><rect x="9.5" y="1" width="7.5" height="5" fill="#ffffff" stroke="#252423" stroke-width="1" shape-rendering="crispEdges"/><rect x="9.5" y="6" width="4" height="5.5" fill="#ffffff" stroke="#252423" stroke-width="1" shape-rendering="crispEdges"/><rect x="13.5" y="6" width="3.5" height="5.5" fill="#ffffff" stroke="#252423" stroke-width="1" shape-rendering="crispEdges"/><rect x="9.5" y="11.5" width="4" height="5.5" fill="#ffffff" stroke="#252423" stroke-width="1" shape-rendering="crispEdges"/><rect x="13.5" y="11.5" width="3.5" height="5.5" fill="#ffffff" stroke="#252423" stroke-width="1" shape-rendering="crispEdges"/></svg>
<svg style="left:1569px;top:357px;" width="20" height="20" viewBox="0 0 20 20"><circle cx="9.500" cy="8" r="6" fill="#fff" stroke="#252423" stroke-width="1.100"/><path d="M6 5c1-2 3-2.500 4.500-1.500L9 6l2 1.500-1.500 2L7 9z M11 9.500l3-1 .5 2-2 2.500z M5 10l2 .5 1 2.500-2-.5z" fill="#2e9b3e"/><path d="M6.500 1.500C1 4.500 1 12 7 15" fill="none" stroke="#252423" stroke-width="1.100"/><path d="M9.500 14.500V17M3 17.300h13" fill="none" stroke="#252423" stroke-width="1.100"/></svg>
<svg style="left:1597px;top:357px;" width="20" height="20" viewBox="0 0 20 20"><path d="M8 1.500l2 1 3-1.500h5v8l-1.500 3-3 2-4.500 2-1.500-4z" fill="#c8c6c4" stroke="#8a8886" stroke-width="1"/><path d="M1 1.500h5.500l1.500 1-.5 3.500 1 2-3 1.500L3 8.500 1.500 5z" fill="#83beec" stroke="#106ebe" stroke-width="1"/><path d="M11.500 8.500l6.500-.5v3l-2 3.500-3.500.5-3.500 1 .5-3.500z" fill="#83beec" stroke="#106ebe" stroke-width="1"/><path d="M1.500 8.500l4 1 3.500-.5 1 3-1 4-3.500-1.500L2 12z" fill="#c8c6c4" stroke="#8a8886" stroke-width="1"/></svg>
<svg style="left:1625px;top:357px;" width="20" height="20" viewBox="0 0 20 20"><path d="M1 13a8.500 8.500 0 0 1 17 0h-4a4.500 4.500 0 0 0-9 0z" fill="#fff" stroke="#252423" stroke-width="1.100"/><path d="M7.500 4.700A8.500 8.500 0 0 1 18 13h-4a4.500 4.500 0 0 0-5.500-4.400z" fill="#83beec" stroke="#106ebe" stroke-width="1.100"/><path d="M9.500 12.500l4-4" stroke="#252423" stroke-width="1.300"/><circle cx="9.500" cy="12.500" r="1.200" fill="#252423"/></svg>
<svg style="left:1653px;top:357px;" width="20" height="20" viewBox="0 0 20 20"><rect x="1" y="2.5" width="17" height="13" fill="#ffffff" stroke="#252423" stroke-width="1" shape-rendering="crispEdges"/><text x="9.500" y="12" font-size="8.500" text-anchor="middle" fill="#106ebe" font-family="Liberation Sans, sans-serif" textLength="13">123</text><path d="M3 13.500h13" stroke="#8a8886" stroke-width="0.900"/></svg>
<svg style="left:1681px;top:357px;" width="20" height="20" viewBox="0 0 20 20"><rect x="1" y="0.8" width="17" height="16.5" fill="#ffffff" stroke="#252423" stroke-width="1" shape-rendering="crispEdges"/><path d="M4 3v12" stroke="#8a8886" stroke-width="1"/><path d="M6 5h9M6 11h9" stroke="#106ebe" stroke-width="1.800"/><path d="M6 8h4M6 14h4" stroke="#8a8886" stroke-width="1"/></svg>
<svg style="left:1709px;top:357px;" width="20" height="20" viewBox="0 0 20 20"><rect x="1" y="1.8" width="17" height="13.5" fill="#ffffff" stroke="#252423" stroke-width="1" shape-rendering="crispEdges"/><path d="M3.500 9.500l3-5.500 3 5.500z" fill="#8fd19e" stroke="#2e9b3e" stroke-width="1"/><path d="M10.500 4.500h6l-3 5.500z" fill="#f1707b" stroke="#d13438" stroke-width="1"/><path d="M3 12.500h13" stroke="#8a8886" stroke-width="0.900"/></svg>
<svg style="left:1569px;top:385px;" width="20" height="20" viewBox="0 0 20 20"><rect x="1" y="1" width="17" height="16.5" fill="#ffffff" stroke="#252423" stroke-width="1" shape-rendering="crispEdges"/><rect x="1" y="1" width="17" height="3" fill="#c8c6c4" stroke="#252423" stroke-width="1" shape-rendering="crispEdges"/><rect x="4" y="7" width="3" height="3" fill="#c8c6c4" stroke="#8a8886" stroke-width="0.9" shape-rendering="crispEdges"/><rect x="4" y="12" width="3" height="3" fill="#c8c6c4" stroke="#8a8886" stroke-width="0.9" shape-rendering="crispEdges"/><path d="M10 9.500h9.500L16 14v4.800h-2.500V14z" fill="#fff" stroke="#252423" stroke-width="1.100"/></svg>
<svg style="left:1597px;top:385px;" width="20" height="20" viewBox="0 0 20 20"><rect x="1" y="1" width="17" height="16.5" fill="#ffffff" stroke="#252423" stroke-width="1" shape-rendering="crispEdges"/><rect x="1" y="1" width="17" height="3" fill="#c8c6c4" stroke="#252423" stroke-width="1" shape-rendering="crispEdges"/><path d="M1 8.500h17M1 13h17M6.500 4v13.500M12.500 4v13.500" stroke="#252423" stroke-width="1" shape-rendering="crispEdges"/></svg>
<svg style="left:1625px;top:385px;" width="20" height="20" viewBox="0 0 20 20"><rect x="1" y="1" width="17" height="16.5" fill="#ffffff" stroke="#252423" stroke-width="1" shape-rendering="crispEdges"/><rect x="12.5" y="4" width="5.5" height="13.5" fill="#83beec" stroke="#106ebe" stroke-width="0" shape-rendering="crispEdges"/><rect x="1" y="13" width="17" height="4.5" fill="#83beec" stroke="#106ebe" stroke-width="0" shape-rendering="crispEdges"/><rect x="1" y="1" width="17" height="3" fill="#c8c6c4" stroke="#252423" stroke-width="1" shape-rendering="crispEdges"/><path d="M1 8.500h17M1 13h17M6.500 4v13.500M12.500 4v13.500" stroke="#252423" stroke-width="1" shape-rendering="crispEdges"/><rect x="1" y="1" width="17" height="16.5" fill="none" stroke="#252423" stroke-width="1" shape-rendering="crispEdges"/></svg>
<svg style="left:1653px;top:385px;" width="20" height="20" viewBox="0 0 20 20"><text x="9" y="15.500" font-size="16" font-weight="700" text-anchor="middle" fill="#1a86d9" font-family="Liberation Sans, sans-serif">R</text></svg>
<svg style="left:1681px;top:385px;" width="20" height="20" viewBox="0 0 20 20"><text x="9" y="13.500" font-size="16.500" font-weight="700" text-anchor="middle" fill="#1a86d9" font-family="Liberation Sans, sans-serif" textLength="19" lengthAdjust="spacingAndGlyphs">Py</text></svg>
<svg style="left:1709px;top:385px;" width="20" height="20" viewBox="0 0 20 20"><path d="M7 9h3M10 3v12M10 3h2.500M10 9h2.500M10 15h2.500" fill="none" stroke="#252423" stroke-width="1"/><rect x="0.5" y="7.3" width="6.5" height="3.5" fill="#83beec" stroke="#106ebe" stroke-width="1" shape-rendering="crispEdges"/><rect x="12.5" y="1.3" width="5.5" height="3.5" fill="#83beec" stroke="#106ebe" stroke-width="1" shape-rendering="crispEdges"/><rect x="12.5" y="7.3" width="5.5" height="3.5" fill="#83beec" stroke="#106ebe" stroke-width="1" shape-rendering="crispEdges"/><rect x="12.5" y="13.3" width="5.5" height="3.5" fill="#83beec" stroke="#106ebe" stroke-width="1" shape-rendering="crispEdges"/></svg>
<svg style="left:1569px;top:413px;" width="20" height="20" viewBox="0 0 20 20"><path d="M4.500 2.500h9.500v5.500c0 3-2 5-4.750 5S4.500 11 4.500 8z" fill="#fff" stroke="#252423" stroke-width="1.100"/><path d="M4.500 3.500H1.500c0 3 1 5 3.500 5.500M14 3.500h3c0 3-1 5-3.500 5.500" fill="none" stroke="#252423" stroke-width="1.100"/><path d="M7.500 13l-1 2.500h5.500l-1-2.500" fill="none" stroke="#252423" stroke-width="1.100"/><rect x="5" y="1" width="8.5" height="1.8" fill="#83beec" stroke="#106ebe" stroke-width="1" shape-rendering="crispEdges"/><rect x="4.5" y="15.8" width="9.5" height="1.7" fill="#83beec" stroke="#106ebe" stroke-width="1" shape-rendering="crispEdges"/></svg>
<svg style="left:1597px;top:413px;" width="20" height="20" viewBox="0 0 20 20"><path d="M7 1.500h11v6l-3.500 1-1 3-2.500 1v4.500H1.500V9.500" fill="#fff" stroke="#106ebe" stroke-width="1.200"/><path d="M18 7l-3.500 1.500-1 3-2.500 1v4.500h-2l.5-4 2.500-2 .5-3.500 3-2.500h2.500z" fill="#83beec" stroke="#106ebe" stroke-width=".8"/><path d="M0.800 1.500a2.600 2.600 0 0 1 5.200 0V7.500l-2.600 3-2.600-3z" fill="#d96e00"/><circle cx="3.400" cy="3.500" r="1.100" fill="#fff"/><circle cx="16.500" cy="15.500" r="2.400" fill="#d96e00"/><rect x="17" y="9.500" width="2.500" height="2.500" fill="#d96e00"/></svg>
<svg style="left:1653px;top:413px;" width="20" height="20" viewBox="0 0 20 20"><rect x="2.3" y="7.300" width="2" height="2" fill="#605e5c"/><rect x="8.7" y="7.300" width="2" height="2" fill="#605e5c"/><rect x="15.100000000000001" y="7.300" width="2" height="2" fill="#605e5c"/></svg>
<div style="left:1623px;top:410px;width:24px;height:24px;background:#e1dfdd;border:1px solid #484644;"></div>
<svg style="left:1625.5px;top:412.5px;" width="19" height="19" viewBox="0 0 19 19"><defs><linearGradient id="dg" x1="0" y1="0" x2="1" y2="1"><stop offset="0" stop-color="#e0389a"/><stop offset=".35" stop-color="#ff7f50"/><stop offset="1" stop-color="#ffa040"/></linearGradient></defs><path d="M1 1h8.500a8.500 8.500 0 0 1 0 17H6v-5h3.500a3.500 3.500 0 0 0 0-7H1z" fill="url(#dg)"/><path d="M1 9a3 3 0 0 1 3-3h2v12H1z" fill="#ffc400"/></svg>
<div style="left:1559px;top:440px;width:180px;height:1px;background:#e1dfdd;"></div>
<span class="t" style='left:1571.40px;top:452.00px;font-size:12px;color:#252423;letter-spacing:-0.503px;'>Values</span>
<div style="left:1563px;top:471px;width:170px;height:162px;background:#fff;border:1px dashed #c8c6c4;"></div>
<div style="left:1566px;top:475px;width:164px;height:23px;background:#edebe9;border:1px solid #c8c6c4;border-radius:2px;"></div>
<span class="t" style='left:1571.40px;top:481.00px;font-size:12px;color:#252423;letter-spacing:0.199px;'>group</span>
<svg style="left:1698.3px;top:481.5px;" width="14" height="9" viewBox="0 0 14 9"><path d="M1 1.500l5.800 5.800 5.800-5.800" fill="none" stroke="#484644" stroke-width="1"/></svg>
<svg style="left:1716px;top:481.5px;" width="10" height="10" viewBox="0 0 10 10"><path d="M1 1l8 8M9 1L1 9" fill="none" stroke="#3b3a39" stroke-width="1"/></svg>
<div style="left:1566px;top:500px;width:164px;height:23px;background:#edebe9;border:1px solid #c8c6c4;border-radius:2px;"></div>
<span class="t" style='left:1571.40px;top:506.00px;font-size:12px;color:#252423;letter-spacing:-0.177px;'>name</span>
<svg style="left:1698.3px;top:506.5px;" width="14" height="9" viewBox="0 0 14 9"><path d="M1 1.500l5.800 5.800 5.800-5.800" fill="none" stroke="#484644" stroke-width="1"/></svg>
<svg style="left:1716px;top:506.5px;" width="10" height="10" viewBox="0 0 10 10"><path d="M1 1l8 8M9 1L1 9" fill="none" stroke="#3b3a39" stroke-width="1"/></svg>
<div style="left:1566px;top:525px;width:164px;height:23px;background:#edebe9;border:1px solid #c8c6c4;border-radius:2px;"></div>
<span class="t" style='left:1571.40px;top:531.00px;font-size:12px;color:#252423;letter-spacing:-0.306px;'>source</span>
<svg style="left:1698.3px;top:531.5px;" width="14" height="9" viewBox="0 0 14 9"><path d="M1 1.500l5.800 5.800 5.800-5.800" fill="none" stroke="#484644" stroke-width="1"/></svg>
<svg style="left:1716px;top:531.5px;" width="10" height="10" viewBox="0 0 10 10"><path d="M1 1l8 8M9 1L1 9" fill="none" stroke="#3b3a39" stroke-width="1"/></svg>
<div style="left:1566px;top:550px;width:164px;height:23px;background:#edebe9;border:1px solid #c8c6c4;border-radius:2px;"></div>
<span class="t" style='left:1571.40px;top:556.00px;font-size:12px;color:#252423;letter-spacing:0.163px;'>target</span>
<svg style="left:1698.3px;top:556.5px;" width="14" height="9" viewBox="0 0 14 9"><path d="M1 1.500l5.800 5.800 5.800-5.800" fill="none" stroke="#484644" stroke-width="1"/></svg>
<svg style="left:1716px;top:556.5px;" width="10" height="10" viewBox="0 0 10 10"><path d="M1 1l8 8M9 1L1 9" fill="none" stroke="#3b3a39" stroke-width="1"/></svg>
<div style="left:1566px;top:575px;width:164px;height:23px;background:#edebe9;border:1px solid #c8c6c4;border-radius:2px;"></div>
<span class="t" style='left:1571.40px;top:581.00px;font-size:12px;color:#252423;letter-spacing:0.271px;'>type</span>
<svg style="left:1698.3px;top:581.5px;" width="14" height="9" viewBox="0 0 14 9"><path d="M1 1.500l5.800 5.800 5.800-5.800" fill="none" stroke="#484644" stroke-width="1"/></svg>
<svg style="left:1716px;top:581.5px;" width="10" height="10" viewBox="0 0 10 10"><path d="M1 1l8 8M9 1L1 9" fill="none" stroke="#3b3a39" stroke-width="1"/></svg>
<div style="left:1566px;top:600px;width:164px;height:23px;background:#edebe9;border:1px solid #c8c6c4;border-radius:2px;"></div>
<span class="t" style='left:1571.40px;top:606.00px;font-size:12px;color:#252423;letter-spacing:-0.172px;'>value</span>
<svg style="left:1698.3px;top:606.5px;" width="14" height="9" viewBox="0 0 14 9"><path d="M1 1.500l5.800 5.800 5.800-5.800" fill="none" stroke="#484644" stroke-width="1"/></svg>
<svg style="left:1716px;top:606.5px;" width="10" height="10" viewBox="0 0 10 10"><path d="M1 1l8 8M9 1L1 9" fill="none" stroke="#3b3a39" stroke-width="1"/></svg>
<span class="t" style='left:1571.50px;top:646.00px;font-size:12px;color:#252423;letter-spacing:0.350px;-webkit-text-stroke:0.28px #252423;'>Drill through</span>
<span class="t" style='left:1571.50px;top:671.00px;font-size:12px;color:#252423;letter-spacing:-0.108px;'>Cross-report</span>
<div style="left:1684.8px;top:669.3px;width:32.3px;height:15.8px;background:#fff;border:1px solid #605e5c;border-radius:8px;"></div>
<div style="left:1688.7px;top:672.8px;width:8.6px;height:8.6px;background:#605e5c;border-radius:50%;"></div>
<span class="t" style='left:1699.60px;top:673.00px;font-size:10px;color:#605e5c;letter-spacing:-0.228px;'>Off</span>
<span class="t" style='left:1571.50px;top:698.00px;font-size:12px;color:#252423;letter-spacing:-0.125px;'>Keep all filters</span>
<div style="left:1684.8px;top:696.2px;width:32.3px;height:15.8px;background:#117865;border-radius:8px;"></div>
<div style="left:1704px;top:699.8px;width:8.6px;height:8.6px;background:#fff;border-radius:50%;"></div>
<span class="t" style='left:1690.00px;top:701.00px;font-size:9px;color:#ffffff;font-weight:700;transform-origin:0 50%;transform:scaleX(0.9280);'>On</span>
<div style="left:1563px;top:722px;width:170px;height:26px;background:#fff;border:1px dashed #c8c6c4;"></div>
<span class="t" style='left:1572.30px;top:730.00px;font-size:12.5px;color:#252423;letter-spacing:-0.092px;'>Add drill-through fields here</span>
<span class="t" style='left:1748.60px;top:172.00px;font-size:16px;color:#252423;letter-spacing:-0.366px;-webkit-text-stroke:0.35px #252423;'>Data</span>
<svg style="left:1898.7px;top:172px;" width="14" height="14" viewBox="0 0 14 14"><path d="M1 1l5.500 5.800L1 12.600M6.800 1l5.500 5.800-5.500 5.800" fill="none" stroke="#252423" stroke-width="1.200"/></svg>
<div style="left:1744.2px;top:205px;width:171.8px;height:26.8px;background:#f3f2f1;border:1px solid #605e5c;border-radius:2px;"></div>
<svg style="left:1751px;top:210px;" width="16" height="16" viewBox="0 0 16 16"><circle cx="10" cy="6.200" r="4.600" fill="none" stroke="#605e5c" stroke-width="1.100"/><path d="M6.700 9.500L1.300 15" stroke="#605e5c" stroke-width="1.100"/></svg>
<span class="t" style='left:1773.00px;top:212.00px;font-size:14px;color:#605e5c;transform-origin:0 50%;transform:scaleX(0.9175);'>Search</span>
<svg style="left:1749px;top:246.5px;" width="8" height="13" viewBox="0 0 8 13"><path d="M1 1l5.500 5.500L1 12" fill="none" stroke="#605e5c" stroke-width="1"/></svg>
<svg style="left:1763px;top:247px;" width="12" height="12" viewBox="0 0 12 12"><g fill="none" stroke="#252423"><rect x="0.700" y="0.700" width="10.600" height="10.600" rx="2" stroke-width="1.100"/><path d="M0.700 4.300h10.600M0.700 7.900h10.600M4.300 0.700v10.600M7.900 0.700v10.600" stroke-width="0.850"/></g></svg>
<span class="t" style='left:1781.60px;top:248.00px;font-size:12px;color:#252423;letter-spacing:-0.469px;'>Deneb</span>
<svg style="left:1749px;top:270.5px;" width="8" height="13" viewBox="0 0 8 13"><path d="M1 1l5.500 5.500L1 12" fill="none" stroke="#605e5c" stroke-width="1"/></svg>
<svg style="left:1763px;top:271px;" width="12" height="12" viewBox="0 0 12 12"><g fill="none" stroke="#252423"><rect x="0.700" y="0.700" width="10.600" height="10.600" rx="2" stroke-width="1.100"/><path d="M0.700 4.300h10.600M0.700 7.900h10.600M4.300 0.700v10.600M7.900 0.700v10.600" stroke-width="0.850"/></g></svg>
<span class="t" style='left:1781.60px;top:272.00px;font-size:12px;color:#252423;transform-origin:0 50%;transform:scaleX(0.9102);'>Links</span>
<svg style="left:1749px;top:294.5px;" width="8" height="13" viewBox="0 0 8 13"><path d="M1 1l5.500 5.500L1 12" fill="none" stroke="#605e5c" stroke-width="1"/></svg>
<svg style="left:1763px;top:295px;" width="12" height="12" viewBox="0 0 12 12"><g fill="none" stroke="#252423"><rect x="0.700" y="0.700" width="10.600" height="10.600" rx="2" stroke-width="1.100"/><path d="M0.700 4.300h10.600M0.700 7.900h10.600M4.300 0.700v10.600M7.900 0.700v10.600" stroke-width="0.850"/></g></svg>
<span class="t" style='left:1781.60px;top:296.00px;font-size:12px;color:#252423;letter-spacing:-0.422px;'>Nodes</span>
<svg style="left:1746.3px;top:321px;" width="13" height="8" viewBox="0 0 13 8"><path d="M1 1l5.500 5.500L12 1" fill="none" stroke="#605e5c" stroke-width="1"/></svg>
<svg style="left:1763px;top:319px;" width="12" height="12" viewBox="0 0 12 12"><g fill="none" stroke="#252423"><rect x="0.700" y="0.700" width="10.600" height="10.600" rx="2" stroke-width="1.100"/><path d="M0.700 4.300h10.600M0.700 7.900h10.600M4.300 0.700v10.600M7.900 0.700v10.600" stroke-width="0.850"/></g></svg>
<span class="t" style='left:1781.60px;top:320.00px;font-size:12px;color:#252423;letter-spacing:-0.321px;'>test_Deneb</span>
<svg style="left:1769px;top:324.8px;" width="12" height="12" viewBox="0 0 12 12"><circle cx="6" cy="6" r="6" fill="#117865"/><path d="M3.300 6.200l1.900 1.900 3.500-3.700" fill="none" stroke="#fff" stroke-width="1.200"/></svg>
<div style="left:1778.2px;top:343.2px;width:11.6px;height:11.6px;background:#117865;border:1px solid #5d6f6a;border-radius:2px;"></div>
<svg style="left:1778.2px;top:343.2px;" width="12" height="12" viewBox="0 0 12 12"><path d="M2.300 6l2.600 2.600 4.800-5.200" fill="none" stroke="#fff" stroke-width="1.300"/></svg>
<span class="t" style='left:1816.40px;top:344.00px;font-size:12px;color:#252423;letter-spacing:0.199px;'>group</span>
<div style="left:1778.2px;top:367.2px;width:11.6px;height:11.6px;background:#117865;border:1px solid #5d6f6a;border-radius:2px;"></div>
<svg style="left:1778.2px;top:367.2px;" width="12" height="12" viewBox="0 0 12 12"><path d="M2.300 6l2.600 2.600 4.800-5.200" fill="none" stroke="#fff" stroke-width="1.300"/></svg>
<span class="t" style='left:1816.40px;top:368.00px;font-size:12px;color:#252423;letter-spacing:-0.344px;'>name</span>
<div style="left:1745px;top:385.2px;width:170px;height:23.5px;background:#d2d0ce;"></div>
<svg style="left:1798px;top:390px;" width="12" height="14" viewBox="0 0 12 14"><g fill="none" stroke="#252423" stroke-width="1.100"><rect x="0.700" y="0.700" width="10.600" height="12.600" rx="1.800"/><rect x="2.900" y="2.900" width="6.200" height="2.300" rx="0.900" stroke-width="1"/></g><rect x="2.4" y="7.1" width="1.800" height="1.800" fill="#252423"/><rect x="2.4" y="9.8" width="1.800" height="1.800" fill="#252423"/><rect x="5.1" y="7.1" width="1.800" height="1.800" fill="#252423"/><rect x="5.1" y="9.8" width="1.800" height="1.800" fill="#252423"/><rect x="7.8" y="7.1" width="1.800" height="1.800" fill="#252423"/><rect x="7.8" y="9.8" width="1.800" height="1.800" fill="#252423"/></svg>
<div style="left:1901.8px;top:396.1px;width:2px;height:2px;background:#605e5c;border-radius:50%;"></div>
<div style="left:1906.2px;top:396.1px;width:2px;height:2px;background:#605e5c;border-radius:50%;"></div>
<div style="left:1910.6px;top:396.1px;width:2px;height:2px;background:#605e5c;border-radius:50%;"></div>
<div style="left:1778.2px;top:391.2px;width:11.6px;height:11.6px;background:#d4d2d0;border:1px solid #8a8886;border-radius:2px;"></div>
<span class="t" style='left:1816.40px;top:392.00px;font-size:12px;color:#252423;letter-spacing:-0.222px;'>Selection_test</span>
<div style="left:1778.2px;top:415.2px;width:11.6px;height:11.6px;background:#117865;border:1px solid #5d6f6a;border-radius:2px;"></div>
<svg style="left:1778.2px;top:415.2px;" width="12" height="12" viewBox="0 0 12 12"><path d="M2.300 6l2.600 2.600 4.800-5.200" fill="none" stroke="#fff" stroke-width="1.300"/></svg>
<span class="t" style='left:1816.40px;top:416.00px;font-size:12px;color:#252423;letter-spacing:-0.206px;'>source</span>
<div style="left:1778.2px;top:439.2px;width:11.6px;height:11.6px;background:#117865;border:1px solid #5d6f6a;border-radius:2px;"></div>
<svg style="left:1778.2px;top:439.2px;" width="12" height="12" viewBox="0 0 12 12"><path d="M2.300 6l2.600 2.600 4.800-5.200" fill="none" stroke="#fff" stroke-width="1.300"/></svg>
<span class="t" style='left:1816.40px;top:440.00px;font-size:12px;color:#252423;letter-spacing:0.163px;'>target</span>
<div style="left:1778.2px;top:463.2px;width:11.6px;height:11.6px;background:#117865;border:1px solid #5d6f6a;border-radius:2px;"></div>
<svg style="left:1778.2px;top:463.2px;" width="12" height="12" viewBox="0 0 12 12"><path d="M2.300 6l2.600 2.600 4.800-5.200" fill="none" stroke="#fff" stroke-width="1.300"/></svg>
<span class="t" style='left:1816.40px;top:464.00px;font-size:12px;color:#252423;letter-spacing:0.271px;'>type</span>
<div style="left:1778.2px;top:487.2px;width:11.6px;height:11.6px;background:#117865;border:1px solid #5d6f6a;border-radius:2px;"></div>
<svg style="left:1778.2px;top:487.2px;" width="12" height="12" viewBox="0 0 12 12"><path d="M2.300 6l2.600 2.600 4.800-5.200" fill="none" stroke="#fff" stroke-width="1.300"/></svg>
<span class="t" style='left:1816.40px;top:488.00px;font-size:12px;color:#252423;letter-spacing:-0.297px;'>value</span>
<svg style="left:1746.3px;top:513px;" width="13" height="8" viewBox="0 0 13 8"><path d="M1 1l5.500 5.500L12 1" fill="none" stroke="#605e5c" stroke-width="1"/></svg>
<svg style="left:1763px;top:511px;" width="12" height="12" viewBox="0 0 12 12"><g fill="none" stroke="#252423"><rect x="0.700" y="0.700" width="10.600" height="10.600" rx="2" stroke-width="1.100"/><path d="M0.700 4.300h10.600M0.700 7.900h10.600M4.300 0.700v10.600M7.900 0.700v10.600" stroke-width="0.850"/></g></svg>
<span class="t" style='left:1781.60px;top:512.00px;font-size:12px;color:#252423;letter-spacing:-0.392px;'>test_Links</span>
<div style="left:1778.2px;top:535.2px;width:11.6px;height:11.6px;background:#fff;border:1px solid #8a8886;border-radius:2px;"></div>
<span class="t" style='left:1816.40px;top:536.00px;font-size:12px;color:#252423;letter-spacing:-0.206px;'>source</span>
<div style="left:1778.2px;top:559.2px;width:11.6px;height:11.6px;background:#fff;border:1px solid #8a8886;border-radius:2px;"></div>
<span class="t" style='left:1816.40px;top:560.00px;font-size:12px;color:#252423;letter-spacing:0.163px;'>target</span>
<div style="left:1778.2px;top:583.2px;width:11.6px;height:11.6px;background:#fff;border:1px solid #8a8886;border-radius:2px;"></div>
<span class="t" style='left:1816.40px;top:584.00px;font-size:12px;color:#252423;letter-spacing:-0.297px;'>value</span>
<svg style="left:1746.3px;top:609px;" width="13" height="8" viewBox="0 0 13 8"><path d="M1 1l5.500 5.500L12 1" fill="none" stroke="#605e5c" stroke-width="1"/></svg>
<svg style="left:1763px;top:607px;" width="12" height="12" viewBox="0 0 12 12"><g fill="none" stroke="#252423"><rect x="0.700" y="0.700" width="10.600" height="10.600" rx="2" stroke-width="1.100"/><path d="M0.700 4.300h10.600M0.700 7.900h10.600M4.300 0.700v10.600M7.900 0.700v10.600" stroke-width="0.850"/></g></svg>
<span class="t" style='left:1781.60px;top:608.00px;font-size:12px;color:#252423;letter-spacing:-0.300px;'>test_Nodes</span>
<div style="left:1778.2px;top:631.2px;width:11.6px;height:11.6px;background:#fff;border:1px solid #8a8886;border-radius:2px;"></div>
<span class="t" style='left:1816.40px;top:632.00px;font-size:12px;color:#252423;letter-spacing:0.199px;'>group</span>
<div style="left:1778.2px;top:655.2px;width:11.6px;height:11.6px;background:#fff;border:1px solid #8a8886;border-radius:2px;"></div>
<span class="t" style='left:1816.40px;top:656.00px;font-size:12px;color:#252423;letter-spacing:-0.344px;'>name</span>
<div style="left:40.5px;top:972px;width:1517.5px;height:35px;background:#f3f2f1;"></div>
<div style="left:0px;top:1007px;width:1920px;height:23.6px;background:#f3f2f1;border-top:1px solid #e1dfdd;"></div>
<div style="left:0px;top:1030.5px;width:1920px;height:2px;background:#000;"></div>
<svg style="left:52px;top:978px;" width="22" height="16" viewBox="0 0 22 16"><g fill="none" stroke="#605e5c" stroke-width="1.300"><rect x="1.500" y="1.600" width="18" height="10.800" rx="0.800"/><path d="M10.500 12.400v2M7 14.400h7"/></g></svg>
<div style="left:51px;top:1000px;width:24px;height:3px;background:#117865;border-radius:1.500px;"></div>
<svg style="left:100px;top:976px;" width="15" height="22" viewBox="0 0 15 22"><g fill="none" stroke="#605e5c" stroke-width="1.200"><rect x="1.500" y="1.600" width="11.500" height="18.800" rx="1.300"/><path d="M6.200 17.700h2.200" stroke-width="1.500"/></g></svg>
<svg style="left:133px;top:985px;" width="8" height="10" viewBox="0 0 8 10"><path d="M6.500 0.800v8.400L1.500 5z" fill="#c8c6c4"/></svg>
<svg style="left:155.5px;top:985px;" width="8" height="10" viewBox="0 0 8 10"><path d="M1.500 0.800v8.400L6.500 5z" fill="#c8c6c4"/></svg>
<div style="left:168.7px;top:972px;width:76px;height:35px;background:#fff;border-left:1px solid #a6a4a2;"></div>
<div style="left:168.7px;top:1003px;width:76px;height:4px;background:#117865;"></div>
<span class="t" style='left:189.00px;top:984.00px;font-size:12.5px;color:#252423;transform-origin:0 50%;transform:scaleX(0.8656);'>Page 1</span>
<div style="left:245px;top:974px;width:38.8px;height:32px;background:#117865;"></div>
<svg style="left:258.5px;top:984.5px;" width="12" height="12" viewBox="0 0 12 12"><path d="M6 0.800v10.400M0.800 6h10.400" stroke="#fff" stroke-width="2.300"/></svg>
<span class="t" style='left:4.50px;top:1015.00px;font-size:12px;color:#605e5c;letter-spacing:-0.339px;'>Page 1 of 1</span>
<div style="left:1708px;top:1019px;width:5px;height:1px;background:#484644;"></div>
<div style="left:1717px;top:1019px;width:100px;height:1px;background:#605e5c;"></div>
<div style="left:1759px;top:1014px;width:4px;height:11px;background:#605e5c;"></div>
<div style="left:1767px;top:1017px;width:1px;height:5.5px;background:#605e5c;"></div>
<svg style="left:1823px;top:1016px;" width="8" height="8" viewBox="0 0 8 8"><path d="M4 0.400v7.200M0.400 4h7.200" stroke="#484644" stroke-width="1.200"/></svg>
<span class="t" style='left:1844.40px;top:1014.00px;font-size:12px;color:#605e5c;transform-origin:0 50%;transform:scaleX(0.9238);'>89%</span>
<svg style="left:1885.5px;top:1013.5px;" width="17" height="13" viewBox="0 0 17 13"><g fill="none" stroke="#484644" stroke-width="1"><rect x="0.600" y="0.600" width="15.800" height="11"/><path d="M3 4.800V3h2.500M11.500 3H14v1.800M14 7.400v1.800h-2.500M5.500 9.200H3V7.400" stroke-width="1.100"/></g></svg>
<div style="left:0px;top:34px;width:1920px;height:126px;background:#fafafa;"></div>
<div style="left:0px;top:0px;width:1920px;height:34px;background:#3b3a39;"></div>
<svg style="left:16px;top:9px;" width="18" height="18" viewBox="0 0 18 18"><g fill="none" stroke="#d6d4d2" stroke-width="1.250"><path d="M1.900 1.700h14.600v14.600H4.500L1.900 13.700z"/><path d="M4.600 1.700v5.900h9.200V1.700"/><path d="M5.800 16.300v-5.500h7v5.500"/></g></svg>
<svg style="left:46px;top:9px;" width="18" height="18" viewBox="0 0 18 18"><path d="M2.600 1.400v7.200h6.400M3 8.200l5.200-4.800c2.300-2 5.300-1.600 6.700.6 1.200 2 .7 4-.9 5.600l-6.400 6.300" fill="none" stroke="#f3f2f1" stroke-width="1.350"/></svg>
<svg style="left:77px;top:9px;" width="18" height="18" viewBox="0 0 18 18"><path d="M2.600 1.400v7.200h6.400M3 8.200l5.200-4.800c2.300-2 5.300-1.600 6.700.6 1.200 2 .7 4-.9 5.600l-6.400 6.300" fill="none" stroke="#8a8886" stroke-width="1.200" transform="translate(17.400,0) scale(-1,1)"/></svg>
<span class="t" style='left:721.00px;top:12.00px;font-size:12px;color:#ffffff;letter-spacing:-0.190px;'>Force Directed Graph (1) - Power BI Desktop (January 2024)</span>
<div style="left:1651px;top:3px;width:99px;height:29px;background:#fff;"></div>
<svg style="left:1752px;top:6px;" width="22" height="22" viewBox="0 0 22 22"><circle cx="11" cy="11" r="10" fill="#f3f2f1"/><circle cx="11" cy="7" r="2.7" fill="none" stroke="#201f1e" stroke-width="1.4"/><path d="M4.900 11.500h12.200c0 3.700-2.600 6-6.100 6s-6.100-2.300-6.100-6z" fill="none" stroke="#201f1e" stroke-width="1.4"/></svg>
<div style="left:1805px;top:17px;width:10.5px;height:1px;background:#fff;"></div>
<svg style="left:1847px;top:11px;" width="14" height="14" viewBox="0 0 14 14"><g fill="none" stroke="#fff" stroke-width="1.1"><rect x="1.600" y="4.300" width="7.800" height="7.800" rx="1.5"/><path d="M4.300 2.300h6.200a1.600 1.600 0 0 1 1.600 1.600v6.200"/></g></svg>
<svg style="left:1891px;top:11px;" width="14" height="14" viewBox="0 0 14 14"><path d="M1.600 1.900l10.400 10.400M12 1.900L1.600 12.300" stroke="#fff" stroke-width="1.2" fill="none"/></svg>
<div style="left:500px;top:35.5px;width:75px;height:29px;background:#ffffff;"></div>
<div style="left:579px;top:35.5px;width:100px;height:29px;background:#ffffff;"></div>
<div style="left:683px;top:35.5px;width:98px;height:29px;background:#ffffff;"></div>
<div style="left:785px;top:35.5px;width:120px;height:29px;background:#ffffff;"></div>
<span class="t" style='left:23.00px;top:43.00px;font-size:14px;color:#252423;transform-origin:0 50%;transform:scaleX(0.8953);'>File</span>
<span class="t" style='left:81.90px;top:43.00px;font-size:14px;color:#252423;letter-spacing:-0.286px;'>Home</span>
<span class="t" style='left:150.80px;top:43.00px;font-size:14px;color:#252423;letter-spacing:-0.263px;'>Insert</span>
<span class="t" style='left:217.10px;top:43.00px;font-size:14px;color:#252423;letter-spacing:0.239px;'>Modeling</span>
<span class="t" style='left:307.50px;top:43.00px;font-size:14px;color:#252423;letter-spacing:-0.265px;'>View</span>
<span class="t" style='left:368.40px;top:43.00px;font-size:14px;color:#252423;letter-spacing:0.095px;'>Optimize</span>
<span class="t" style='left:456.20px;top:43.00px;font-size:14px;color:#252423;letter-spacing:-0.299px;'>Help</span>
<span class="t" style='left:515.75px;top:43.00px;font-size:14px;color:#252423;letter-spacing:-0.019px;-webkit-text-stroke:0.3px #252423;'>Format</span>
<span class="t" style='left:595.00px;top:43.00px;font-size:14px;color:#252423;letter-spacing:0.240px;-webkit-text-stroke:0.3px #252423;'>Data / Drill</span>
<span class="t" style='left:698.00px;top:43.00px;font-size:14px;color:#252423;letter-spacing:0.106px;-webkit-text-stroke:0.3px #252423;'>Table tools</span>
<span class="t" style='left:800.75px;top:43.00px;font-size:14px;color:#252423;letter-spacing:0.109px;-webkit-text-stroke:0.3px #252423;'>Measure tools</span>
<div style="left:800px;top:62px;width:90px;height:3px;background:#117865;"></div>
<svg style="left:11px;top:83px;" width="18" height="18" viewBox="0 0 18 18"><g fill="none" stroke="#323130" stroke-width="1.300" stroke-linejoin="miter"><path d="M8.700 2.300h7.100v6.500l-7.900 7.800-6.700-6.700z"/><path d="M5 10.400l5.300-4.400M7.200 12.700l4.800-4.500" stroke-width="0.800" stroke="#605e5c"/></g><circle cx="12.900" cy="5.100" r="1" fill="#323130"/></svg>
<span class="t" style='left:32.50px;top:88.00px;font-size:12px;color:#323130;letter-spacing:-0.372px;'>Name</span>
<div style="left:98px;top:81px;width:130px;height:24px;background:#fff;border:1px solid #7a7a7a;"></div>
<span class="t" style='left:102.60px;top:88.00px;font-size:12px;color:#323130;letter-spacing:-0.207px;'>Selection_test</span>
<svg style="left:11px;top:112px;" width="18" height="18" viewBox="0 0 18 18"><path d="M1.300 9.400l7.600-8 7.900 8M2.600 8.300v8.100h4.600v-5.800h3.400v5.800h4.800V8.300" fill="none" stroke="#252423" stroke-width="1.400"/></svg>
<span class="t" style='left:32.50px;top:116.00px;font-size:12px;color:#323130;letter-spacing:-0.075px;'>Home table</span>
<div style="left:98px;top:109px;width:130px;height:24px;background:#fff;border:1px solid #7a7a7a;"></div>
<span class="t" style='left:102.60px;top:116.00px;font-size:12px;color:#323130;letter-spacing:-0.266px;'>test_Deneb</span>
<svg style="left:216.5px;top:119.5px;" width="9" height="8" viewBox="0 0 9 8"><path d="M1.200 1.800l3.200 3.600 3.200-3.600" fill="none" stroke="#323130" stroke-width="1.3"/></svg>
<div style="left:238.0px;top:70.5px;width:1px;height:87px;background:#d2d0ce;"></div>
<div style="left:460.0px;top:70.5px;width:1px;height:87px;background:#d2d0ce;"></div>
<div style="left:711.0px;top:70.5px;width:1px;height:87px;background:#d2d0ce;"></div>
<div style="left:826.0px;top:70.5px;width:1px;height:87px;background:#d2d0ce;"></div>
<span class="t" style='left:99.25px;top:149.00px;font-size:10px;color:#484644;letter-spacing:-0.135px;'>Structure</span>
<span class="t" style='left:250.50px;top:85.00px;font-size:11px;color:#201f1e;font-weight:700;transform-origin:0 50%;transform:scaleX(0.9116);'>$%</span>
<svg style="left:256px;top:89px;" width="14" height="14" viewBox="0 0 14 14"><path d="M3 11.200L11 3.200" stroke="#0f6cbd" stroke-width="3.800" stroke-linecap="round"/><path d="M4 10.200L11 3.200" stroke="#ffffff" stroke-width="1.500" stroke-linecap="round"/><path d="M1 13.300l2.600-.8-1.800-1.800z" fill="#0f6cbd"/></svg>
<span class="t" style='left:271.25px;top:88.00px;font-size:12px;color:#323130;letter-spacing:-0.253px;'>Format</span>
<div style="left:312px;top:81px;width:130px;height:24px;background:#fff;border:1px solid #7a7a7a;"></div>
<span class="t" style='left:317.50px;top:88.00px;font-size:12px;color:#323130;letter-spacing:0.064px;'>Whole number</span>
<svg style="left:431.3px;top:92px;" width="9" height="8" viewBox="0 0 9 8"><path d="M1.500 1.500l2.900 3.200 2.900-3.200" fill="none" stroke="#323130" stroke-width="1.600"/></svg>
<span class="t" style='left:254.50px;top:113.00px;font-size:18px;color:#323130;transform-origin:0 50%;transform:scale(0.82,1.08);'>$</span>
<svg style="left:270.3px;top:119.8px;" width="9" height="8" viewBox="0 0 9 8"><path d="M1.700 1.500l2.700 3 2.700-3" fill="none" stroke="#323130" stroke-width="1.500"/></svg>
<span class="t" style='left:285.50px;top:114.00px;font-size:17px;color:#323130;transform-origin:0 50%;transform:scaleX(0.93);'>%</span>
<svg style="left:312px;top:115px;" width="10" height="13" viewBox="0 0 10 13"><path d="M5 0.800a3.200 3.200 0 0 1 3.200 3.400c0 3.400-2 6.200-5.600 7.800l-.8-1.300c2-1 3.200-2.300 3.500-3.800A3.200 3.200 0 0 1 1.800 4 3.200 3.200 0 0 1 5 .8z" fill="#201f1e"/></svg>
<svg style="left:329px;top:113px;" width="16" height="16" viewBox="0 0 16 16"><g fill="none" stroke="#201f1e" stroke-width="1.250"><rect x="6.300" y="0.700" width="3.300" height="5.500" rx="1.600"/><rect x="11.300" y="0.700" width="3.300" height="5.500" rx="1.600"/><rect x="11.300" y="9.600" width="3.300" height="5.500" rx="1.600"/></g><circle cx="3.500" cy="5.600" r="0.750" fill="#201f1e"/><circle cx="8.800" cy="14.500" r="0.750" fill="#201f1e"/><path d="M0.500 11.600h7.200M5.200 9l2.600 2.600-2.600 2.600" fill="none" stroke="#0f6cbd" stroke-width="1.150"/></svg>
<div style="left:365px;top:109px;width:72px;height:24px;background:#fff;border:1px solid #7a7a7a;"></div>
<span class="t" style='left:370.00px;top:116.00px;font-size:12px;color:#323130;'>0</span>
<svg style="left:425.5px;top:112.5px;" width="9" height="18" viewBox="0 0 9 18"><path d="M1.600 5l2.800-3 2.800 3M1.600 13l2.800 3 2.800-3" fill="none" stroke="#323130" stroke-width="1.400"/></svg>
<span class="t" style='left:325.52px;top:149.00px;font-size:10px;color:#484644;letter-spacing:-0.005px;'>Formatting</span>
<svg style="left:474px;top:88px;" width="14" height="17" viewBox="0 0 14 17"><g fill="none" stroke="#323130" stroke-width="1.100"><rect x="1.500" y="1.500" width="11" height="14"/><path d="M1.500 8.500h11M5.500 3.800v1.700h3V3.800M5.500 10.800v1.700h3v-1.700"/></g></svg>
<span class="t" style='left:493.00px;top:92.00px;font-size:12px;color:#323130;letter-spacing:-0.081px;'>Data category</span>
<div style="left:571px;top:85px;width:130px;height:24px;background:#fff;border:1px solid #7a7a7a;"></div>
<span class="t" style='left:576.25px;top:92.00px;font-size:12px;color:#323130;letter-spacing:-0.095px;'>Uncategorized</span>
<svg style="left:690.3px;top:95.8px;" width="9" height="8" viewBox="0 0 9 8"><path d="M1.500 1.500l2.900 3.200 2.900-3.200" fill="none" stroke="#323130" stroke-width="1.600"/></svg>
<span class="t" style='left:563.77px;top:149.00px;font-size:10px;color:#484644;letter-spacing:-0.148px;'>Properties</span>
<svg style="left:734px;top:77px;" width="19" height="28" viewBox="0 0 19 28"><rect x="0.500" y="0.500" width="18" height="27" fill="#fff" stroke="#252423" stroke-width="1" shape-rendering="crispEdges"/><rect x="3.500" y="3.500" width="12" height="4" fill="#9cc9ef" stroke="#106ebe" stroke-width="1" shape-rendering="crispEdges"/><rect x="3.20" y="10.20" width="2.600" height="2.600" fill="#2b2b2b"/><rect x="3.20" y="16.20" width="2.600" height="2.600" fill="#2b2b2b"/><rect x="3.20" y="22.20" width="2.600" height="2.600" fill="#2b2b2b"/><rect x="8.25" y="10.20" width="2.600" height="2.600" fill="#2b2b2b"/><rect x="8.25" y="16.20" width="2.600" height="2.600" fill="#2b2b2b"/><rect x="8.25" y="22.20" width="2.600" height="2.600" fill="#2b2b2b"/><rect x="13.30" y="10.20" width="2.600" height="2.600" fill="#2b2b2b"/><rect x="13.30" y="16.20" width="2.600" height="2.600" fill="#2b2b2b"/><rect x="13.30" y="22.20" width="2.600" height="2.600" fill="#2b2b2b"/></svg>
<svg style="left:783px;top:77px;" width="19" height="28" viewBox="0 0 19 28"><rect x="0.500" y="0.500" width="18" height="27" fill="#fff" stroke="#252423" stroke-width="1" shape-rendering="crispEdges"/><rect x="3.500" y="3.500" width="12" height="4" fill="#d2d0ce" stroke="#8a8886" stroke-width="1" shape-rendering="crispEdges"/><rect x="3.20" y="10.20" width="2.600" height="2.600" fill="#2b2b2b"/><rect x="3.20" y="16.20" width="2.600" height="2.600" fill="#2b2b2b"/><rect x="3.20" y="22.20" width="2.600" height="2.600" fill="#2b2b2b"/><rect x="8.25" y="10.20" width="2.600" height="2.600" fill="#2b2b2b"/><rect x="8.25" y="16.20" width="2.600" height="2.600" fill="#2b2b2b"/><rect x="8.25" y="22.20" width="2.600" height="2.600" fill="#2b2b2b"/><rect x="13.30" y="10.20" width="2.600" height="2.600" fill="#2b2b2b"/><rect x="13.30" y="16.20" width="2.600" height="2.600" fill="#2b2b2b"/><rect x="13.30" y="22.20" width="2.600" height="2.600" fill="#2b2b2b"/></svg>
<svg style="left:775px;top:74px;" width="17" height="22" viewBox="0 0 17 22"><path d="M8.200 1.200h6.700l-4.100 7.300h3.600L2.400 20.700l5-9.400h-5z" fill="#ffdf80" stroke="#e67e00" stroke-width="1" stroke-linejoin="miter"/></svg>
<span class="t" style='left:732.98px;top:112.00px;font-size:12px;color:#323130;letter-spacing:-0.383px;'>New</span>
<span class="t" style='left:722.48px;top:128.00px;font-size:12px;color:#323130;letter-spacing:-0.406px;'>measure</span>
<span class="t" style='left:778.75px;top:112.00px;font-size:12px;color:#323130;letter-spacing:-0.297px;'>Quick</span>
<span class="t" style='left:772.02px;top:128.00px;font-size:12px;color:#323130;letter-spacing:-0.490px;'>measure</span>
<span class="t" style='left:742.50px;top:149.00px;font-size:10px;color:#484644;letter-spacing:-0.180px;'>Calculations</span>
<div style="left:1872px;top:83px;width:60px;height:48px;background:#24292e;border-radius:24px 0 0 24px;box-shadow:0 1px 9px rgba(0,0,0,.38);"></div>
<div style="left:1919px;top:83px;width:1px;height:48px;background:#6a6e73;"></div>
<svg style="left:1883px;top:93px;" width="26" height="28" viewBox="0 0 26 28"><defs><linearGradient id="cg" x1="0" y1="0" x2="0" y2="1"><stop offset="0" stop-color="#0a36a8"/><stop offset="1" stop-color="#1e9be8"/></linearGradient></defs><path d="M5.200 20.300L3.200 24.600l6.600-2.300z" fill="#fff" stroke="#1e9be8" stroke-width="1"/><circle cx="12.800" cy="12.300" r="11.100" fill="#fff" stroke="url(#cg)" stroke-width="1.500"/><path d="M2.800 9.200C5.300 3.700 13.300 1.700 18.800 5.200 14.300 4.700 9.300 5.700 6.800 9.200 5.300 8.800 3.900 8.800 2.800 9.200z" fill="#9bbcec"/><path d="M5.300 8.700C9.300 4.200 16.300 4.200 19.800 7.700 17.800 11.200 14.300 13.700 10.800 14 12.800 11.200 12.300 8.700 9.800 8 8.300 7.800 6.600 8.100 5.300 8.700z" fill="#0d47b8"/><path d="M3.600 12.800c1.500-2.200 5-2.700 7.500-1.300-.5 1.800-3 3.100-5.700 2.800-.8-.4-1.400-.9-1.800-1.500z" fill="#1565d8"/></svg>
<svg style="left:1904.8px;top:144.8px;" width="11" height="10" viewBox="0 0 11 10"><path d="M1.600 7.800l3.900-4.300 3.900 4.300" fill="none" stroke="#201f1e" stroke-width="1.700"/></svg>
<div style="left:0px;top:160px;width:1920px;height:6px;background:linear-gradient(rgba(0,0,0,.16),rgba(0,0,0,0));z-index:50;"></div>
</div></body></html>
